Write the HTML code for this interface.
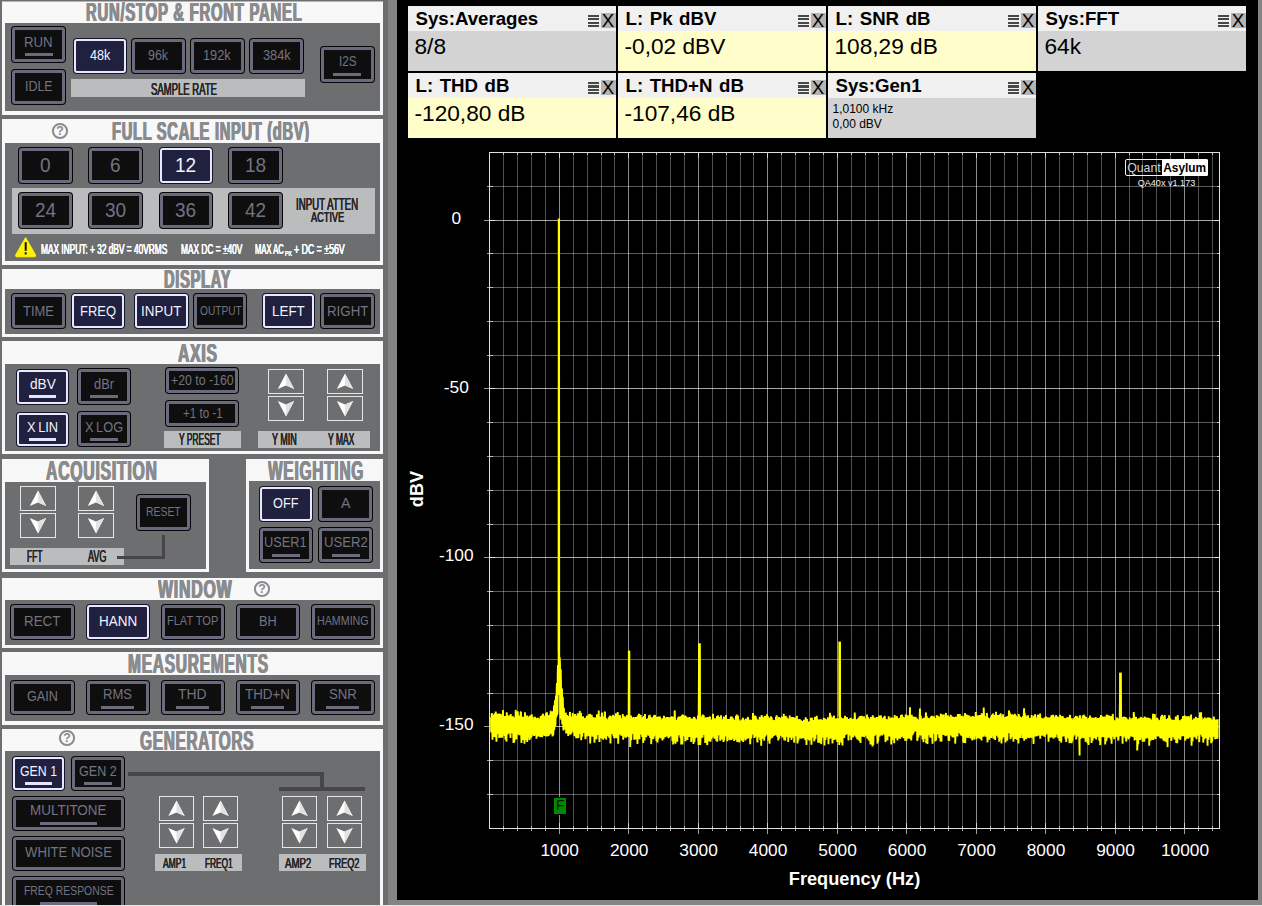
<!DOCTYPE html>
<html><head><meta charset="utf-8"><title>QA40x</title>
<style>
html,body{margin:0;padding:0}
body{width:1262px;height:906px;overflow:hidden;position:relative;background:#6d6e70;font-family:"Liberation Sans",sans-serif}
#strip{position:absolute;left:388px;top:0;width:874px;height:906px;background:#848484}
#blk{position:absolute;left:397px;top:0;width:861px;height:900px;background:#000}
#bot{position:absolute;left:0;top:905px;width:1262px;height:1px;background:#e4e4e4;z-index:5}
.r{position:absolute}
.t{position:absolute;white-space:nowrap;transform-origin:0 0;display:block}
.btn{position:absolute;box-sizing:border-box;background:#0e0e0e;border:3px solid #6a6a7c;border-radius:3px;box-shadow:0 0 0 1px #050505}
.btn.on{background:#20203f;border:2px solid #e8e8ff;box-shadow:0 0 0 1px #15152a}
.arr{position:absolute;display:block;overflow:visible}
.mb{position:absolute;width:208px;height:65px;overflow:hidden}
.mh{position:absolute;left:0;top:0;width:208px;height:25px;background:#f0f0f0}
.mh b{position:absolute;left:7.5px;top:1.5px;font-size:18.67px;line-height:21px;color:#000;white-space:nowrap;word-spacing:1.4px}
.mn{position:absolute;left:180px;top:9px;width:11px;height:12px;background:repeating-linear-gradient(#484848 0,#484848 2.2px,#f0f0f0 2.2px,#f0f0f0 3.3px)}
.mx{position:absolute;left:193px;top:7px;width:15px;height:15px;background:#b4b4b4;color:#000;font-style:normal;font-size:18.67px;line-height:15px;text-align:center;text-indent:-1px}
.mv{position:absolute;left:6.5px;top:26.6px;font-size:22.67px;line-height:26px;color:#000;white-space:nowrap}
.ms{position:absolute;left:4.5px;top:29px;font-size:12px;line-height:15.2px;color:#000;white-space:nowrap}
.title{text-shadow:0.9px 0 0 currentColor,-0.9px 0 0 currentColor}
.lbl{text-shadow:0.3px 0 0 currentColor,-0.3px 0 0 currentColor}
.ct{font-family:"Liberation Sans",sans-serif}
</style></head>
<body>
<div id="strip"></div><div id="blk"></div><div id="bot"></div>
<div id="leftpane">
<div class="r " style="left:2.00px;top:1.00px;width:381.30px;height:1.20px;background:#b4b4b6;"></div>
<div class="r panel" style="left:2.00px;top:2.00px;width:381.30px;height:112.60px;background:#f8f8f8;"></div>
<div class="r inner" style="left:5.00px;top:23.40px;width:375.00px;height:87.60px;background:#6d6e70;"></div>
<span class="t title" style="left:86.20px;top:-0.47px;font-size:25.44px;line-height:25.44px;color:#8a8b8e;font-weight:bold;height:22.89px;overflow:hidden;letter-spacing:1.3px;transform:scaleX(0.5843)">RUN/STOP &amp; FRONT PANEL</span>
<div class="btn" style="left:12.00px;top:27.00px;width:53.00px;height:35.00px"></div>
<span class="t bl" style="left:24.20px;top:34.98px;font-size:14.53px;line-height:14.53px;color:#737382;transform:scaleX(0.9082)">RUN</span>
<div class="r ul" style="left:24.50px;top:52.90px;width:28.00px;height:3.00px;background:#6b6b7d;"></div>
<div class="btn" style="left:12.00px;top:69.50px;width:53.00px;height:34.10px"></div>
<span class="t bl" style="left:24.70px;top:79.06px;font-size:14.39px;line-height:14.39px;color:#737382;transform:scaleX(0.8627)">IDLE</span>
<div class="btn on" style="left:74.00px;top:38.50px;width:51.60px;height:34.00px"></div>
<span class="t bl" style="left:89.65px;top:48.06px;font-size:14.39px;line-height:14.39px;color:#f2f2ff;transform:scaleX(0.8750)">48k</span>
<div class="btn" style="left:132.00px;top:38.50px;width:52.70px;height:34.00px"></div>
<span class="t bl" style="left:148.35px;top:48.06px;font-size:14.39px;line-height:14.39px;color:#737382;transform:scaleX(0.8620)">96k</span>
<div class="btn" style="left:191.00px;top:38.50px;width:52.70px;height:34.00px"></div>
<span class="t bl" style="left:203.45px;top:48.06px;font-size:14.39px;line-height:14.39px;color:#737382;transform:scaleX(0.8909)">192k</span>
<div class="btn" style="left:250.40px;top:38.50px;width:52.40px;height:34.00px"></div>
<span class="t bl" style="left:262.75px;top:48.06px;font-size:14.39px;line-height:14.39px;color:#737382;transform:scaleX(0.8877)">384k</span>
<div class="btn" style="left:321.00px;top:47.00px;width:52.80px;height:35.00px"></div>
<span class="t bl" style="left:338.55px;top:55.35px;font-size:13.81px;line-height:13.81px;color:#737382;transform:scaleX(0.8540)">I2S</span>
<div class="r ul" style="left:333.40px;top:72.90px;width:28.00px;height:3.00px;background:#6b6b7d;"></div>
<div class="r bar" style="left:70.50px;top:79.00px;width:234.80px;height:18.00px;background:#bbbcbe;"></div>
<span class="t lbl" style="left:151.00px;top:81.25px;font-size:17.01px;line-height:17.01px;color:#262626;transform:scaleX(0.5602)">SAMPLE RATE</span>
<div class="r panel" style="left:2.00px;top:119.30px;width:381.30px;height:145.40px;background:#f8f8f8;"></div>
<div class="r inner" style="left:5.00px;top:142.50px;width:375.00px;height:118.90px;background:#6d6e70;"></div>
<span class="t title" style="left:111.70px;top:118.02px;font-size:26.45px;line-height:26.45px;color:#8a8b8e;font-weight:bold;height:23.81px;overflow:hidden;letter-spacing:1.3px;transform:scaleX(0.5542)">FULL SCALE INPUT (dBV)</span>
<svg class="arr" style="left:50.90px;top:121.50px" width="18" height="18"><circle cx="9" cy="9" r="7.1" fill="none" stroke="#8a8b8e" stroke-width="2"/><text x="9" y="13.4" text-anchor="middle" font-family="Liberation Sans, sans-serif" font-weight="bold" font-size="12.3" fill="#8a8b8e">?</text></svg>
<div class="btn" style="left:19.00px;top:148.00px;width:53.00px;height:34.60px"></div>
<span class="t bl" style="left:40.22px;top:155.51px;font-size:19.48px;line-height:19.48px;color:#737382;transform:scaleX(0.9755)">0</span>
<div class="btn" style="left:89.20px;top:148.00px;width:52.80px;height:34.60px"></div>
<span class="t bl" style="left:110.32px;top:155.51px;font-size:19.48px;line-height:19.48px;color:#737382;transform:scaleX(0.9755)">6</span>
<div class="btn on" style="left:159.50px;top:148.00px;width:52.70px;height:34.60px"></div>
<span class="t bl" style="left:175.28px;top:155.51px;font-size:19.48px;line-height:19.48px;color:#f2f2ff;transform:scaleX(0.9755)">12</span>
<div class="btn" style="left:229.30px;top:148.00px;width:52.50px;height:34.60px"></div>
<span class="t bl" style="left:244.98px;top:155.51px;font-size:19.48px;line-height:19.48px;color:#737382;transform:scaleX(0.9755)">18</span>
<div class="r bar" style="left:12.00px;top:187.60px;width:362.80px;height:46.30px;background:#bbbcbe;"></div>
<div class="btn" style="left:19.00px;top:193.20px;width:53.00px;height:34.70px"></div>
<span class="t bl" style="left:34.93px;top:200.51px;font-size:19.48px;line-height:19.48px;color:#737382;transform:scaleX(0.9755)">24</span>
<div class="btn" style="left:89.20px;top:193.20px;width:52.80px;height:34.70px"></div>
<span class="t bl" style="left:105.03px;top:200.51px;font-size:19.48px;line-height:19.48px;color:#737382;transform:scaleX(0.9755)">30</span>
<div class="btn" style="left:159.50px;top:193.20px;width:52.70px;height:34.70px"></div>
<span class="t bl" style="left:175.28px;top:200.51px;font-size:19.48px;line-height:19.48px;color:#737382;transform:scaleX(0.9755)">36</span>
<div class="btn" style="left:229.30px;top:193.20px;width:52.50px;height:34.70px"></div>
<span class="t bl" style="left:244.98px;top:200.51px;font-size:19.48px;line-height:19.48px;color:#737382;transform:scaleX(0.9755)">42</span>
<span class="t lbl" style="left:296.00px;top:196.83px;font-size:15.84px;line-height:15.84px;color:#262626;transform:scaleX(0.6126)">INPUT ATTEN</span>
<span class="t lbl" style="left:311.00px;top:208.97px;font-size:15.55px;line-height:15.55px;color:#262626;transform:scaleX(0.5910)">ACTIVE</span>
<svg class="arr" style="left:14px;top:236px" width="24" height="22"><path d="M11.6 1.6 L21.6 19 Q22.2 20.6 20.4 20.8 L2.8 20.8 Q1 20.6 1.7 19 Z" fill="#fff200" stroke="#fff200" stroke-width="1" stroke-linejoin="round"/><rect x="10.7" y="6.2" width="2" height="8.6" fill="#111"/><rect x="10.7" y="16.3" width="2" height="2.2" fill="#111"/></svg>
<span class="t lbl" style="left:40.90px;top:242.20px;font-size:14.10px;line-height:14.10px;color:#ffffff;transform:scaleX(0.5904)">MAX INPUT: + 32 dBV = 40VRMS</span>
<span class="t lbl" style="left:180.70px;top:242.20px;font-size:14.10px;line-height:14.10px;color:#ffffff;transform:scaleX(0.5910)">MAX DC = ±40V</span>
<span class="t lbl" style="left:255.20px;top:242.20px;font-size:14.10px;line-height:14.10px;color:#ffffff;transform:scaleX(0.5405)">MAX AC</span>
<span class="t lbl" style="left:284.60px;top:249.90px;font-size:7.70px;line-height:7.70px;color:#ffffff;transform:scaleX(0.6811)">PK</span>
<span class="t lbl" style="left:293.50px;top:242.20px;font-size:14.10px;line-height:14.10px;color:#ffffff;transform:scaleX(0.6228)">+ DC = ±56V</span>
<div class="r panel" style="left:2.00px;top:269.30px;width:381.30px;height:67.50px;background:#f8f8f8;"></div>
<div class="r inner" style="left:5.00px;top:289.10px;width:375.00px;height:44.60px;background:#6d6e70;"></div>
<span class="t title" style="left:164.20px;top:266.53px;font-size:25.44px;line-height:25.44px;color:#8a8b8e;font-weight:bold;height:22.89px;overflow:hidden;letter-spacing:1.3px;transform:scaleX(0.5747)">DISPLAY</span>
<div class="btn" style="left:12.40px;top:294.00px;width:52.40px;height:34.30px"></div>
<span class="t bl" style="left:23.10px;top:303.98px;font-size:14.53px;line-height:14.53px;color:#737382;transform:scaleX(0.8929)">TIME</span>
<div class="btn on" style="left:71.80px;top:294.00px;width:51.90px;height:34.30px"></div>
<span class="t bl" style="left:79.75px;top:303.98px;font-size:14.53px;line-height:14.53px;color:#f2f2ff;transform:scaleX(0.8916)">FREQ</span>
<div class="btn on" style="left:135.40px;top:294.00px;width:52.20px;height:34.30px"></div>
<span class="t bl" style="left:141.30px;top:303.98px;font-size:14.53px;line-height:14.53px;color:#f2f2ff;transform:scaleX(0.9265)">INPUT</span>
<div class="btn" style="left:194.30px;top:294.00px;width:52.20px;height:34.30px"></div>
<span class="t bl" style="left:199.55px;top:303.92px;font-size:13.66px;line-height:13.66px;color:#737382;transform:scaleX(0.7424)">OUTPUT</span>
<div class="btn on" style="left:262.50px;top:294.00px;width:51.90px;height:34.30px"></div>
<span class="t bl" style="left:272.05px;top:303.98px;font-size:14.53px;line-height:14.53px;color:#f2f2ff;transform:scaleX(0.9230)">LEFT</span>
<div class="btn" style="left:321.40px;top:294.00px;width:52.40px;height:34.30px"></div>
<span class="t bl" style="left:326.90px;top:303.98px;font-size:14.53px;line-height:14.53px;color:#737382;transform:scaleX(0.9156)">RIGHT</span>
<div class="r panel" style="left:2.00px;top:340.80px;width:381.30px;height:113.00px;background:#f8f8f8;"></div>
<div class="r inner" style="left:5.00px;top:363.80px;width:375.00px;height:86.80px;background:#6d6e70;"></div>
<span class="t title" style="left:178.40px;top:340.17px;font-size:26.16px;line-height:26.16px;color:#8a8b8e;font-weight:bold;height:23.55px;overflow:hidden;letter-spacing:1.3px;transform:scaleX(0.6003)">AXIS</span>
<div class="btn on" style="left:16.80px;top:369.70px;width:51.60px;height:33.90px"></div>
<span class="t bl" style="left:29.65px;top:376.98px;font-size:14.53px;line-height:14.53px;color:#f2f2ff;transform:scaleX(0.9427)">dBV</span>
<div class="r ul" style="left:29.10px;top:395.05px;width:27.00px;height:3.00px;background:#e4e4ff;"></div>
<div class="btn" style="left:78.30px;top:369.20px;width:52.20px;height:34.50px"></div>
<span class="t bl" style="left:94.40px;top:376.98px;font-size:14.53px;line-height:14.53px;color:#737382;transform:scaleX(0.8842)">dBr</span>
<div class="r ul" style="left:90.40px;top:394.85px;width:28.00px;height:3.00px;background:#6b6b7d;"></div>
<div class="btn on" style="left:16.80px;top:412.50px;width:51.60px;height:33.90px"></div>
<span class="t bl" style="left:27.00px;top:419.98px;font-size:14.53px;line-height:14.53px;color:#f2f2ff;transform:scaleX(0.8858)">X LIN</span>
<div class="r ul" style="left:29.10px;top:437.85px;width:27.00px;height:3.00px;background:#e4e4ff;"></div>
<div class="btn" style="left:77.50px;top:412.20px;width:52.20px;height:34.30px"></div>
<span class="t bl" style="left:84.50px;top:419.98px;font-size:14.53px;line-height:14.53px;color:#737382;transform:scaleX(0.8822)">X LOG</span>
<div class="r ul" style="left:89.60px;top:437.75px;width:28.00px;height:3.00px;background:#6b6b7d;"></div>
<div class="btn" style="left:166.30px;top:368.10px;width:72.10px;height:25.10px"></div>
<span class="t bl" style="left:171.00px;top:374.35px;font-size:13.81px;line-height:13.81px;color:#737382;transform:scaleX(0.8925)">+20 to -160</span>
<div class="btn" style="left:166.30px;top:401.40px;width:72.10px;height:25.10px"></div>
<span class="t bl" style="left:182.55px;top:407.35px;font-size:13.81px;line-height:13.81px;color:#737382;transform:scaleX(0.8388)">+1 to -1</span>
<div class="r bar" style="left:164.30px;top:430.50px;width:76.60px;height:17.10px;background:#bbbcbe;"></div>
<span class="t lbl" style="left:179.40px;top:431.18px;font-size:16.13px;line-height:16.13px;color:#262626;transform:scaleX(0.5232)">Y PRESET</span>
<svg class="arr" style="left:268.00px;top:369.00px" width="36.00" height="25.00"><rect x="0.5" y="0.5" width="35.00" height="24.00" fill="none" stroke="#e6e6e6" stroke-width="1"/><polygon points="18.00,4.6 26.20,20.00 18.00,16.60 9.80,20.00" fill="#ffffff"/><polygon points="18.00,4.6 26.20,20.00 18.00,16.60" fill="#e2e2e2"/></svg>
<svg class="arr" style="left:268.00px;top:396.00px" width="36.00" height="25.00"><rect x="0.5" y="0.5" width="35.00" height="24.00" fill="none" stroke="#e6e6e6" stroke-width="1"/><polygon points="18.00,20.40 26.20,5 18.00,8.4 9.80,5" fill="#ffffff"/><polygon points="18.00,20.40 26.20,5 18.00,8.4" fill="#e2e2e2"/></svg>
<svg class="arr" style="left:327.00px;top:369.00px" width="36.00" height="25.00"><rect x="0.5" y="0.5" width="35.00" height="24.00" fill="none" stroke="#e6e6e6" stroke-width="1"/><polygon points="18.00,4.6 26.20,20.00 18.00,16.60 9.80,20.00" fill="#ffffff"/><polygon points="18.00,4.6 26.20,20.00 18.00,16.60" fill="#e2e2e2"/></svg>
<svg class="arr" style="left:327.00px;top:396.00px" width="36.00" height="25.00"><rect x="0.5" y="0.5" width="35.00" height="24.00" fill="none" stroke="#e6e6e6" stroke-width="1"/><polygon points="18.00,20.40 26.20,5 18.00,8.4 9.80,5" fill="#ffffff"/><polygon points="18.00,20.40 26.20,5 18.00,8.4" fill="#e2e2e2"/></svg>
<div class="r bar" style="left:257.80px;top:430.50px;width:112.20px;height:17.10px;background:#bbbcbe;"></div>
<span class="t lbl" style="left:271.60px;top:431.18px;font-size:16.13px;line-height:16.13px;color:#262626;transform:scaleX(0.5570)">Y MIN</span>
<span class="t lbl" style="left:328.00px;top:431.18px;font-size:16.13px;line-height:16.13px;color:#262626;transform:scaleX(0.5289)">Y MAX</span>
<div class="r panel" style="left:2.00px;top:459.00px;width:206.70px;height:112.90px;background:#f8f8f8;"></div>
<div class="r inner" style="left:5.00px;top:481.60px;width:200.50px;height:87.10px;background:#6d6e70;"></div>
<span class="t title" style="left:46.00px;top:456.87px;font-size:27.76px;line-height:27.76px;color:#8a8b8e;font-weight:bold;height:24.99px;overflow:hidden;letter-spacing:1.3px;transform:scaleX(0.5692)">ACQUISITION</span>
<svg class="arr" style="left:20.00px;top:486.00px" width="36.00" height="25.00"><rect x="0.5" y="0.5" width="35.00" height="24.00" fill="none" stroke="#e6e6e6" stroke-width="1"/><polygon points="18.00,4.6 26.20,20.00 18.00,16.60 9.80,20.00" fill="#ffffff"/><polygon points="18.00,4.6 26.20,20.00 18.00,16.60" fill="#e2e2e2"/></svg>
<svg class="arr" style="left:20.00px;top:513.00px" width="36.00" height="25.00"><rect x="0.5" y="0.5" width="35.00" height="24.00" fill="none" stroke="#e6e6e6" stroke-width="1"/><polygon points="18.00,20.40 26.20,5 18.00,8.4 9.80,5" fill="#ffffff"/><polygon points="18.00,20.40 26.20,5 18.00,8.4" fill="#e2e2e2"/></svg>
<svg class="arr" style="left:78.00px;top:486.00px" width="36.00" height="25.00"><rect x="0.5" y="0.5" width="35.00" height="24.00" fill="none" stroke="#e6e6e6" stroke-width="1"/><polygon points="18.00,4.6 26.20,20.00 18.00,16.60 9.80,20.00" fill="#ffffff"/><polygon points="18.00,4.6 26.20,20.00 18.00,16.60" fill="#e2e2e2"/></svg>
<svg class="arr" style="left:78.00px;top:513.00px" width="36.00" height="25.00"><rect x="0.5" y="0.5" width="35.00" height="24.00" fill="none" stroke="#e6e6e6" stroke-width="1"/><polygon points="18.00,20.40 26.20,5 18.00,8.4 9.80,5" fill="#ffffff"/><polygon points="18.00,20.40 26.20,5 18.00,8.4" fill="#e2e2e2"/></svg>
<div class="btn" style="left:137.30px;top:495.30px;width:52.70px;height:34.50px"></div>
<span class="t bl" style="left:146.30px;top:505.14px;font-size:13.23px;line-height:13.23px;color:#737382;transform:scaleX(0.7869)">RESET</span>
<div class="r bar" style="left:10.00px;top:548.10px;width:114.10px;height:17.00px;background:#bbbcbe;"></div>
<span class="t lbl" style="left:27.30px;top:549.47px;font-size:16.57px;line-height:16.57px;color:#262626;transform:scaleX(0.5104)">FFT</span>
<span class="t lbl" style="left:88.00px;top:549.47px;font-size:16.57px;line-height:16.57px;color:#262626;transform:scaleX(0.5479)">AVG</span>
<div class="r " style="left:162.40px;top:534.70px;width:2.80px;height:24.10px;background:#464648;"></div>
<div class="r " style="left:116.50px;top:555.90px;width:48.70px;height:2.90px;background:#464648;"></div>
<div class="r panel" style="left:246.00px;top:459.00px;width:137.30px;height:112.90px;background:#f8f8f8;"></div>
<div class="r inner" style="left:249.10px;top:481.40px;width:131.10px;height:87.30px;background:#6d6e70;"></div>
<span class="t title" style="left:267.80px;top:456.94px;font-size:27.62px;line-height:27.62px;color:#8a8b8e;font-weight:bold;height:24.85px;overflow:hidden;letter-spacing:1.3px;transform:scaleX(0.5613)">WEIGHTING</span>
<div class="btn on" style="left:259.60px;top:486.50px;width:52.20px;height:34.10px"></div>
<span class="t bl" style="left:273.00px;top:495.19px;font-size:15.12px;line-height:15.12px;color:#f2f2ff;transform:scaleX(0.8404)">OFF</span>
<div class="btn" style="left:319.40px;top:486.50px;width:52.60px;height:34.10px"></div>
<span class="t bl" style="left:340.95px;top:495.19px;font-size:15.12px;line-height:15.12px;color:#737382;transform:scaleX(0.9422)">A</span>
<div class="btn" style="left:259.60px;top:528.20px;width:52.20px;height:34.30px"></div>
<span class="t bl" style="left:264.45px;top:535.26px;font-size:14.97px;line-height:14.97px;color:#737382;transform:scaleX(0.8513)">USER1</span>
<div class="r ul" style="left:271.70px;top:553.75px;width:28.00px;height:3.00px;background:#6b6b7d;"></div>
<div class="btn" style="left:319.40px;top:528.20px;width:52.60px;height:34.30px"></div>
<span class="t bl" style="left:323.75px;top:535.26px;font-size:14.97px;line-height:14.97px;color:#737382;transform:scaleX(0.8794)">USER2</span>
<div class="r ul" style="left:331.70px;top:553.75px;width:28.00px;height:3.00px;background:#6b6b7d;"></div>
<div class="r panel" style="left:2.00px;top:577.50px;width:381.30px;height:70.80px;background:#f8f8f8;"></div>
<div class="r inner" style="left:5.00px;top:600.20px;width:375.00px;height:45.00px;background:#6d6e70;"></div>
<span class="t title" style="left:157.80px;top:575.95px;font-size:26.60px;line-height:26.60px;color:#8a8b8e;font-weight:bold;height:23.94px;overflow:hidden;letter-spacing:1.3px;transform:scaleX(0.5974)">WINDOW</span>
<svg class="arr" style="left:252.80px;top:580.00px" width="18" height="18"><circle cx="9" cy="9" r="7.1" fill="none" stroke="#8a8b8e" stroke-width="2"/><text x="9" y="13.4" text-anchor="middle" font-family="Liberation Sans, sans-serif" font-weight="bold" font-size="12.3" fill="#8a8b8e">?</text></svg>
<div class="btn" style="left:11.30px;top:604.50px;width:62.50px;height:34.00px"></div>
<span class="t bl" style="left:24.35px;top:614.06px;font-size:14.39px;line-height:14.39px;color:#737382;transform:scaleX(0.9292)">RECT</span>
<div class="btn on" style="left:86.60px;top:604.50px;width:62.20px;height:34.00px"></div>
<span class="t bl" style="left:98.55px;top:614.06px;font-size:14.39px;line-height:14.39px;color:#f2f2ff;transform:scaleX(0.9393)">HANN</span>
<div class="btn" style="left:161.50px;top:604.50px;width:62.10px;height:34.00px"></div>
<span class="t bl" style="left:166.90px;top:614.06px;font-size:13.37px;line-height:13.37px;color:#737382;transform:scaleX(0.8250)">FLAT TOP</span>
<div class="btn" style="left:236.70px;top:604.50px;width:62.10px;height:34.00px"></div>
<span class="t bl" style="left:258.90px;top:614.06px;font-size:14.39px;line-height:14.39px;color:#737382;transform:scaleX(0.8854)">BH</span>
<div class="btn" style="left:311.50px;top:604.50px;width:62.30px;height:34.00px"></div>
<span class="t bl" style="left:316.80px;top:614.06px;font-size:13.37px;line-height:13.37px;color:#737382;transform:scaleX(0.8000)">HAMMING</span>
<div class="r panel" style="left:2.00px;top:652.30px;width:381.30px;height:72.50px;background:#f8f8f8;"></div>
<div class="r inner" style="left:5.00px;top:675.10px;width:375.00px;height:46.10px;background:#6d6e70;"></div>
<span class="t title" style="left:127.60px;top:650.81px;font-size:26.89px;line-height:26.89px;color:#8a8b8e;font-weight:bold;height:24.20px;overflow:hidden;letter-spacing:1.3px;transform:scaleX(0.5772)">MEASUREMENTS</span>
<div class="btn" style="left:11.30px;top:680.50px;width:62.50px;height:33.80px"></div>
<span class="t bl" style="left:27.10px;top:690.27px;font-size:13.95px;line-height:13.95px;color:#737382;transform:scaleX(0.9058)">GAIN</span>
<div class="btn" style="left:86.60px;top:680.50px;width:62.20px;height:33.80px"></div>
<span class="t bl" style="left:103.20px;top:688.27px;font-size:13.95px;line-height:13.95px;color:#737382;transform:scaleX(0.9352)">RMS</span>
<div class="r ul" style="left:101.35px;top:705.80px;width:32.70px;height:3.00px;background:#6b6b7d;"></div>
<div class="btn" style="left:161.50px;top:680.50px;width:62.10px;height:33.80px"></div>
<span class="t bl" style="left:178.25px;top:688.27px;font-size:13.95px;line-height:13.95px;color:#737382;transform:scaleX(0.9973)">THD</span>
<div class="r ul" style="left:176.20px;top:705.80px;width:32.70px;height:3.00px;background:#6b6b7d;"></div>
<div class="btn" style="left:236.70px;top:680.50px;width:62.10px;height:33.80px"></div>
<span class="t bl" style="left:245.25px;top:688.27px;font-size:13.95px;line-height:13.95px;color:#737382;transform:scaleX(0.9594)">THD+N</span>
<div class="r ul" style="left:251.40px;top:705.80px;width:32.70px;height:3.00px;background:#6b6b7d;"></div>
<div class="btn" style="left:311.50px;top:680.50px;width:62.30px;height:33.80px"></div>
<span class="t bl" style="left:328.70px;top:688.27px;font-size:13.95px;line-height:13.95px;color:#737382;transform:scaleX(0.9470)">SNR</span>
<div class="r ul" style="left:326.30px;top:705.80px;width:32.70px;height:3.00px;background:#6b6b7d;"></div>
<div class="r panel" style="left:2.00px;top:728.70px;width:381.30px;height:186.30px;background:#f8f8f8;"></div>
<div class="r inner" style="left:5.00px;top:751.20px;width:375.00px;height:163.80px;background:#6d6e70;"></div>
<span class="t title" style="left:140.30px;top:726.72px;font-size:28.05px;line-height:28.05px;color:#8a8b8e;font-weight:bold;height:25.25px;overflow:hidden;letter-spacing:1.3px;transform:scaleX(0.5486)">GENERATORS</span>
<svg class="arr" style="left:58.40px;top:729.20px" width="18" height="18"><circle cx="9" cy="9" r="7.1" fill="none" stroke="#8a8b8e" stroke-width="2"/><text x="9" y="13.4" text-anchor="middle" font-family="Liberation Sans, sans-serif" font-weight="bold" font-size="12.3" fill="#8a8b8e">?</text></svg>
<div class="btn on" style="left:12.90px;top:756.70px;width:51.60px;height:33.70px"></div>
<span class="t bl" style="left:20.20px;top:764.20px;font-size:14.10px;line-height:14.10px;color:#f2f2ff;transform:scaleX(0.8745)">GEN 1</span>
<div class="r ul" style="left:25.20px;top:781.95px;width:27.00px;height:3.00px;background:#e4e4ff;"></div>
<div class="btn" style="left:71.50px;top:756.70px;width:52.40px;height:33.70px"></div>
<span class="t bl" style="left:78.85px;top:764.20px;font-size:14.10px;line-height:14.10px;color:#737382;transform:scaleX(0.8910)">GEN 2</span>
<div class="r ul" style="left:83.70px;top:781.95px;width:28.00px;height:3.00px;background:#6b6b7d;"></div>
<div class="btn" style="left:12.90px;top:796.80px;width:111.00px;height:33.70px"></div>
<span class="t bl" style="left:30.10px;top:804.35px;font-size:13.81px;line-height:13.81px;color:#737382;transform:scaleX(0.9757)">MULTITONE</span>
<div class="r ul" style="left:39.90px;top:822.05px;width:57.00px;height:3.00px;background:#6b6b7d;"></div>
<div class="btn" style="left:12.90px;top:836.50px;width:111.00px;height:33.40px"></div>
<span class="t bl" style="left:24.90px;top:846.27px;font-size:13.95px;line-height:13.95px;color:#737382;transform:scaleX(0.9431)">WHITE NOISE</span>
<div class="btn" style="left:12.90px;top:876.50px;width:111.00px;height:33.70px"></div>
<span class="t bl" style="left:23.55px;top:884.06px;font-size:13.37px;line-height:13.37px;color:#737382;transform:scaleX(0.7788)">FREQ RESPONSE</span>
<div class="r ul" style="left:39.90px;top:901.75px;width:57.00px;height:3.00px;background:#6b6b7d;"></div>
<div class="r " style="left:128.40px;top:771.60px;width:195.50px;height:4.30px;background:#464648;"></div>
<div class="r " style="left:320.10px;top:771.60px;width:3.80px;height:16.40px;background:#464648;"></div>
<div class="r " style="left:279.20px;top:786.70px;width:85.90px;height:4.10px;background:#464648;"></div>
<svg class="arr" style="left:159.00px;top:796.00px" width="35.00" height="25.00"><rect x="0.5" y="0.5" width="34.00" height="24.00" fill="none" stroke="#e6e6e6" stroke-width="1"/><polygon points="17.50,4.6 25.70,20.00 17.50,16.60 9.30,20.00" fill="#ffffff"/><polygon points="17.50,4.6 25.70,20.00 17.50,16.60" fill="#e2e2e2"/></svg>
<svg class="arr" style="left:159.00px;top:823.00px" width="35.00" height="25.00"><rect x="0.5" y="0.5" width="34.00" height="24.00" fill="none" stroke="#e6e6e6" stroke-width="1"/><polygon points="17.50,20.40 25.70,5 17.50,8.4 9.30,5" fill="#ffffff"/><polygon points="17.50,20.40 25.70,5 17.50,8.4" fill="#e2e2e2"/></svg>
<svg class="arr" style="left:203.00px;top:796.00px" width="35.00" height="25.00"><rect x="0.5" y="0.5" width="34.00" height="24.00" fill="none" stroke="#e6e6e6" stroke-width="1"/><polygon points="17.50,4.6 25.70,20.00 17.50,16.60 9.30,20.00" fill="#ffffff"/><polygon points="17.50,4.6 25.70,20.00 17.50,16.60" fill="#e2e2e2"/></svg>
<svg class="arr" style="left:203.00px;top:823.00px" width="35.00" height="25.00"><rect x="0.5" y="0.5" width="34.00" height="24.00" fill="none" stroke="#e6e6e6" stroke-width="1"/><polygon points="17.50,20.40 25.70,5 17.50,8.4 9.30,5" fill="#ffffff"/><polygon points="17.50,20.40 25.70,5 17.50,8.4" fill="#e2e2e2"/></svg>
<svg class="arr" style="left:282.00px;top:796.00px" width="35.00" height="25.00"><rect x="0.5" y="0.5" width="34.00" height="24.00" fill="none" stroke="#e6e6e6" stroke-width="1"/><polygon points="17.50,4.6 25.70,20.00 17.50,16.60 9.30,20.00" fill="#ffffff"/><polygon points="17.50,4.6 25.70,20.00 17.50,16.60" fill="#e2e2e2"/></svg>
<svg class="arr" style="left:282.00px;top:823.00px" width="35.00" height="25.00"><rect x="0.5" y="0.5" width="34.00" height="24.00" fill="none" stroke="#e6e6e6" stroke-width="1"/><polygon points="17.50,20.40 25.70,5 17.50,8.4 9.30,5" fill="#ffffff"/><polygon points="17.50,20.40 25.70,5 17.50,8.4" fill="#e2e2e2"/></svg>
<svg class="arr" style="left:327.00px;top:796.00px" width="35.00" height="25.00"><rect x="0.5" y="0.5" width="34.00" height="24.00" fill="none" stroke="#e6e6e6" stroke-width="1"/><polygon points="17.50,4.6 25.70,20.00 17.50,16.60 9.30,20.00" fill="#ffffff"/><polygon points="17.50,4.6 25.70,20.00 17.50,16.60" fill="#e2e2e2"/></svg>
<svg class="arr" style="left:327.00px;top:823.00px" width="35.00" height="25.00"><rect x="0.5" y="0.5" width="34.00" height="24.00" fill="none" stroke="#e6e6e6" stroke-width="1"/><polygon points="17.50,20.40 25.70,5 17.50,8.4 9.30,5" fill="#ffffff"/><polygon points="17.50,20.40 25.70,5 17.50,8.4" fill="#e2e2e2"/></svg>
<div class="r bar" style="left:155.00px;top:853.90px;width:86.70px;height:16.90px;background:#bbbcbe;"></div>
<div class="r bar" style="left:278.90px;top:853.90px;width:87.00px;height:16.90px;background:#bbbcbe;"></div>
<span class="t lbl" style="left:163.20px;top:855.05px;font-size:15.41px;line-height:15.41px;color:#262626;transform:scaleX(0.5529)">AMP1</span>
<span class="t lbl" style="left:205.40px;top:855.05px;font-size:15.41px;line-height:15.41px;color:#262626;transform:scaleX(0.5373)">FREQ1</span>
<span class="t lbl" style="left:285.30px;top:855.05px;font-size:15.41px;line-height:15.41px;color:#262626;transform:scaleX(0.6268)">AMP2</span>
<span class="t lbl" style="left:328.70px;top:855.05px;font-size:15.41px;line-height:15.41px;color:#262626;transform:scaleX(0.5918)">FREQ2</span>
</div>
<div id="meas">
<div class="mb" style="left:408px;top:6px;background:#d3d3d3"><div class="mh"><b>Sys:Averages</b><i class="mn"></i><i class="mx">X</i></div>
<div class="mv">8/8</div></div>
<div class="mb" style="left:618px;top:6px;background:#fffdc9"><div class="mh"><b>L: Pk dBV</b><i class="mn"></i><i class="mx">X</i></div>
<div class="mv">-0,02 dBV</div></div>
<div class="mb" style="left:828px;top:6px;background:#fffdc9"><div class="mh"><b>L: SNR dB</b><i class="mn"></i><i class="mx">X</i></div>
<div class="mv">108,29 dB</div></div>
<div class="mb" style="left:1038px;top:6px;background:#d3d3d3"><div class="mh"><b>Sys:FFT</b><i class="mn"></i><i class="mx">X</i></div>
<div class="mv">64k</div></div>
<div class="mb" style="left:408px;top:73px;background:#fffdc9"><div class="mh"><b>L: THD dB</b><i class="mn"></i><i class="mx">X</i></div>
<div class="mv">-120,80 dB</div></div>
<div class="mb" style="left:618px;top:73px;background:#fffdc9"><div class="mh"><b>L: THD+N dB</b><i class="mn"></i><i class="mx">X</i></div>
<div class="mv">-107,46 dB</div></div>
<div class="mb" style="left:828px;top:73px;background:#d3d3d3"><div class="mh"><b>Sys:Gen1</b><i class="mn"></i><i class="mx">X</i></div>
<div class="ms">1,0100 kHz<br>0,00 dBV</div></div>
</div>
<svg id="chart" width="1262" height="906" viewBox="0 0 1262 906" style="position:absolute;left:0;top:0">
<g shape-rendering="crispEdges" stroke-width="1"><line x1="503.5" y1="152.5" x2="503.5" y2="828.1" stroke="rgba(255,255,255,0.31)"/><line x1="503.5" y1="825.5" x2="503.5" y2="830.7" stroke="rgba(255,255,255,0.62)"/><line x1="503.5" y1="152.5" x2="503.5" y2="155.1" stroke="rgba(255,255,255,0.62)"/><line x1="517.5" y1="152.5" x2="517.5" y2="828.1" stroke="rgba(255,255,255,0.31)"/><line x1="517.5" y1="825.5" x2="517.5" y2="830.7" stroke="rgba(255,255,255,0.62)"/><line x1="517.5" y1="152.5" x2="517.5" y2="155.1" stroke="rgba(255,255,255,0.62)"/><line x1="531.5" y1="152.5" x2="531.5" y2="828.1" stroke="rgba(255,255,255,0.31)"/><line x1="531.5" y1="825.5" x2="531.5" y2="830.7" stroke="rgba(255,255,255,0.62)"/><line x1="531.5" y1="152.5" x2="531.5" y2="155.1" stroke="rgba(255,255,255,0.62)"/><line x1="545.5" y1="152.5" x2="545.5" y2="828.1" stroke="rgba(255,255,255,0.31)"/><line x1="545.5" y1="825.5" x2="545.5" y2="830.7" stroke="rgba(255,255,255,0.62)"/><line x1="545.5" y1="152.5" x2="545.5" y2="155.1" stroke="rgba(255,255,255,0.62)"/><line x1="559.5" y1="152.5" x2="559.5" y2="828.1" stroke="rgba(255,255,255,0.55)"/><line x1="559.5" y1="822.6" x2="559.5" y2="833.6" stroke="rgba(255,255,255,0.62)"/><line x1="559.5" y1="152.5" x2="559.5" y2="158.0" stroke="rgba(255,255,255,0.62)"/><line x1="573.5" y1="152.5" x2="573.5" y2="828.1" stroke="rgba(255,255,255,0.31)"/><line x1="573.5" y1="825.5" x2="573.5" y2="830.7" stroke="rgba(255,255,255,0.62)"/><line x1="573.5" y1="152.5" x2="573.5" y2="155.1" stroke="rgba(255,255,255,0.62)"/><line x1="587.5" y1="152.5" x2="587.5" y2="828.1" stroke="rgba(255,255,255,0.31)"/><line x1="587.5" y1="825.5" x2="587.5" y2="830.7" stroke="rgba(255,255,255,0.62)"/><line x1="587.5" y1="152.5" x2="587.5" y2="155.1" stroke="rgba(255,255,255,0.62)"/><line x1="601.5" y1="152.5" x2="601.5" y2="828.1" stroke="rgba(255,255,255,0.31)"/><line x1="601.5" y1="825.5" x2="601.5" y2="830.7" stroke="rgba(255,255,255,0.62)"/><line x1="601.5" y1="152.5" x2="601.5" y2="155.1" stroke="rgba(255,255,255,0.62)"/><line x1="614.5" y1="152.5" x2="614.5" y2="828.1" stroke="rgba(255,255,255,0.31)"/><line x1="614.5" y1="825.5" x2="614.5" y2="830.7" stroke="rgba(255,255,255,0.62)"/><line x1="614.5" y1="152.5" x2="614.5" y2="155.1" stroke="rgba(255,255,255,0.62)"/><line x1="628.5" y1="152.5" x2="628.5" y2="828.1" stroke="rgba(255,255,255,0.55)"/><line x1="628.5" y1="822.6" x2="628.5" y2="833.6" stroke="rgba(255,255,255,0.62)"/><line x1="628.5" y1="152.5" x2="628.5" y2="158.0" stroke="rgba(255,255,255,0.62)"/><line x1="642.5" y1="152.5" x2="642.5" y2="828.1" stroke="rgba(255,255,255,0.31)"/><line x1="642.5" y1="825.5" x2="642.5" y2="830.7" stroke="rgba(255,255,255,0.62)"/><line x1="642.5" y1="152.5" x2="642.5" y2="155.1" stroke="rgba(255,255,255,0.62)"/><line x1="656.5" y1="152.5" x2="656.5" y2="828.1" stroke="rgba(255,255,255,0.31)"/><line x1="656.5" y1="825.5" x2="656.5" y2="830.7" stroke="rgba(255,255,255,0.62)"/><line x1="656.5" y1="152.5" x2="656.5" y2="155.1" stroke="rgba(255,255,255,0.62)"/><line x1="670.5" y1="152.5" x2="670.5" y2="828.1" stroke="rgba(255,255,255,0.31)"/><line x1="670.5" y1="825.5" x2="670.5" y2="830.7" stroke="rgba(255,255,255,0.62)"/><line x1="670.5" y1="152.5" x2="670.5" y2="155.1" stroke="rgba(255,255,255,0.62)"/><line x1="684.5" y1="152.5" x2="684.5" y2="828.1" stroke="rgba(255,255,255,0.31)"/><line x1="684.5" y1="825.5" x2="684.5" y2="830.7" stroke="rgba(255,255,255,0.62)"/><line x1="684.5" y1="152.5" x2="684.5" y2="155.1" stroke="rgba(255,255,255,0.62)"/><line x1="698.5" y1="152.5" x2="698.5" y2="828.1" stroke="rgba(255,255,255,0.55)"/><line x1="698.5" y1="822.6" x2="698.5" y2="833.6" stroke="rgba(255,255,255,0.62)"/><line x1="698.5" y1="152.5" x2="698.5" y2="158.0" stroke="rgba(255,255,255,0.62)"/><line x1="712.5" y1="152.5" x2="712.5" y2="828.1" stroke="rgba(255,255,255,0.31)"/><line x1="712.5" y1="825.5" x2="712.5" y2="830.7" stroke="rgba(255,255,255,0.62)"/><line x1="712.5" y1="152.5" x2="712.5" y2="155.1" stroke="rgba(255,255,255,0.62)"/><line x1="726.5" y1="152.5" x2="726.5" y2="828.1" stroke="rgba(255,255,255,0.31)"/><line x1="726.5" y1="825.5" x2="726.5" y2="830.7" stroke="rgba(255,255,255,0.62)"/><line x1="726.5" y1="152.5" x2="726.5" y2="155.1" stroke="rgba(255,255,255,0.62)"/><line x1="740.5" y1="152.5" x2="740.5" y2="828.1" stroke="rgba(255,255,255,0.31)"/><line x1="740.5" y1="825.5" x2="740.5" y2="830.7" stroke="rgba(255,255,255,0.62)"/><line x1="740.5" y1="152.5" x2="740.5" y2="155.1" stroke="rgba(255,255,255,0.62)"/><line x1="753.5" y1="152.5" x2="753.5" y2="828.1" stroke="rgba(255,255,255,0.31)"/><line x1="753.5" y1="825.5" x2="753.5" y2="830.7" stroke="rgba(255,255,255,0.62)"/><line x1="753.5" y1="152.5" x2="753.5" y2="155.1" stroke="rgba(255,255,255,0.62)"/><line x1="767.5" y1="152.5" x2="767.5" y2="828.1" stroke="rgba(255,255,255,0.55)"/><line x1="767.5" y1="822.6" x2="767.5" y2="833.6" stroke="rgba(255,255,255,0.62)"/><line x1="767.5" y1="152.5" x2="767.5" y2="158.0" stroke="rgba(255,255,255,0.62)"/><line x1="781.5" y1="152.5" x2="781.5" y2="828.1" stroke="rgba(255,255,255,0.31)"/><line x1="781.5" y1="825.5" x2="781.5" y2="830.7" stroke="rgba(255,255,255,0.62)"/><line x1="781.5" y1="152.5" x2="781.5" y2="155.1" stroke="rgba(255,255,255,0.62)"/><line x1="795.5" y1="152.5" x2="795.5" y2="828.1" stroke="rgba(255,255,255,0.31)"/><line x1="795.5" y1="825.5" x2="795.5" y2="830.7" stroke="rgba(255,255,255,0.62)"/><line x1="795.5" y1="152.5" x2="795.5" y2="155.1" stroke="rgba(255,255,255,0.62)"/><line x1="809.5" y1="152.5" x2="809.5" y2="828.1" stroke="rgba(255,255,255,0.31)"/><line x1="809.5" y1="825.5" x2="809.5" y2="830.7" stroke="rgba(255,255,255,0.62)"/><line x1="809.5" y1="152.5" x2="809.5" y2="155.1" stroke="rgba(255,255,255,0.62)"/><line x1="823.5" y1="152.5" x2="823.5" y2="828.1" stroke="rgba(255,255,255,0.31)"/><line x1="823.5" y1="825.5" x2="823.5" y2="830.7" stroke="rgba(255,255,255,0.62)"/><line x1="823.5" y1="152.5" x2="823.5" y2="155.1" stroke="rgba(255,255,255,0.62)"/><line x1="837.5" y1="152.5" x2="837.5" y2="828.1" stroke="rgba(255,255,255,0.55)"/><line x1="837.5" y1="822.6" x2="837.5" y2="833.6" stroke="rgba(255,255,255,0.62)"/><line x1="837.5" y1="152.5" x2="837.5" y2="158.0" stroke="rgba(255,255,255,0.62)"/><line x1="851.5" y1="152.5" x2="851.5" y2="828.1" stroke="rgba(255,255,255,0.31)"/><line x1="851.5" y1="825.5" x2="851.5" y2="830.7" stroke="rgba(255,255,255,0.62)"/><line x1="851.5" y1="152.5" x2="851.5" y2="155.1" stroke="rgba(255,255,255,0.62)"/><line x1="865.5" y1="152.5" x2="865.5" y2="828.1" stroke="rgba(255,255,255,0.31)"/><line x1="865.5" y1="825.5" x2="865.5" y2="830.7" stroke="rgba(255,255,255,0.62)"/><line x1="865.5" y1="152.5" x2="865.5" y2="155.1" stroke="rgba(255,255,255,0.62)"/><line x1="878.5" y1="152.5" x2="878.5" y2="828.1" stroke="rgba(255,255,255,0.31)"/><line x1="878.5" y1="825.5" x2="878.5" y2="830.7" stroke="rgba(255,255,255,0.62)"/><line x1="878.5" y1="152.5" x2="878.5" y2="155.1" stroke="rgba(255,255,255,0.62)"/><line x1="892.5" y1="152.5" x2="892.5" y2="828.1" stroke="rgba(255,255,255,0.31)"/><line x1="892.5" y1="825.5" x2="892.5" y2="830.7" stroke="rgba(255,255,255,0.62)"/><line x1="892.5" y1="152.5" x2="892.5" y2="155.1" stroke="rgba(255,255,255,0.62)"/><line x1="906.5" y1="152.5" x2="906.5" y2="828.1" stroke="rgba(255,255,255,0.55)"/><line x1="906.5" y1="822.6" x2="906.5" y2="833.6" stroke="rgba(255,255,255,0.62)"/><line x1="906.5" y1="152.5" x2="906.5" y2="158.0" stroke="rgba(255,255,255,0.62)"/><line x1="920.5" y1="152.5" x2="920.5" y2="828.1" stroke="rgba(255,255,255,0.31)"/><line x1="920.5" y1="825.5" x2="920.5" y2="830.7" stroke="rgba(255,255,255,0.62)"/><line x1="920.5" y1="152.5" x2="920.5" y2="155.1" stroke="rgba(255,255,255,0.62)"/><line x1="934.5" y1="152.5" x2="934.5" y2="828.1" stroke="rgba(255,255,255,0.31)"/><line x1="934.5" y1="825.5" x2="934.5" y2="830.7" stroke="rgba(255,255,255,0.62)"/><line x1="934.5" y1="152.5" x2="934.5" y2="155.1" stroke="rgba(255,255,255,0.62)"/><line x1="948.5" y1="152.5" x2="948.5" y2="828.1" stroke="rgba(255,255,255,0.31)"/><line x1="948.5" y1="825.5" x2="948.5" y2="830.7" stroke="rgba(255,255,255,0.62)"/><line x1="948.5" y1="152.5" x2="948.5" y2="155.1" stroke="rgba(255,255,255,0.62)"/><line x1="962.5" y1="152.5" x2="962.5" y2="828.1" stroke="rgba(255,255,255,0.31)"/><line x1="962.5" y1="825.5" x2="962.5" y2="830.7" stroke="rgba(255,255,255,0.62)"/><line x1="962.5" y1="152.5" x2="962.5" y2="155.1" stroke="rgba(255,255,255,0.62)"/><line x1="976.5" y1="152.5" x2="976.5" y2="828.1" stroke="rgba(255,255,255,0.55)"/><line x1="976.5" y1="822.6" x2="976.5" y2="833.6" stroke="rgba(255,255,255,0.62)"/><line x1="976.5" y1="152.5" x2="976.5" y2="158.0" stroke="rgba(255,255,255,0.62)"/><line x1="990.5" y1="152.5" x2="990.5" y2="828.1" stroke="rgba(255,255,255,0.31)"/><line x1="990.5" y1="825.5" x2="990.5" y2="830.7" stroke="rgba(255,255,255,0.62)"/><line x1="990.5" y1="152.5" x2="990.5" y2="155.1" stroke="rgba(255,255,255,0.62)"/><line x1="1004.5" y1="152.5" x2="1004.5" y2="828.1" stroke="rgba(255,255,255,0.31)"/><line x1="1004.5" y1="825.5" x2="1004.5" y2="830.7" stroke="rgba(255,255,255,0.62)"/><line x1="1004.5" y1="152.5" x2="1004.5" y2="155.1" stroke="rgba(255,255,255,0.62)"/><line x1="1017.5" y1="152.5" x2="1017.5" y2="828.1" stroke="rgba(255,255,255,0.31)"/><line x1="1017.5" y1="825.5" x2="1017.5" y2="830.7" stroke="rgba(255,255,255,0.62)"/><line x1="1017.5" y1="152.5" x2="1017.5" y2="155.1" stroke="rgba(255,255,255,0.62)"/><line x1="1031.5" y1="152.5" x2="1031.5" y2="828.1" stroke="rgba(255,255,255,0.31)"/><line x1="1031.5" y1="825.5" x2="1031.5" y2="830.7" stroke="rgba(255,255,255,0.62)"/><line x1="1031.5" y1="152.5" x2="1031.5" y2="155.1" stroke="rgba(255,255,255,0.62)"/><line x1="1045.5" y1="152.5" x2="1045.5" y2="828.1" stroke="rgba(255,255,255,0.55)"/><line x1="1045.5" y1="822.6" x2="1045.5" y2="833.6" stroke="rgba(255,255,255,0.62)"/><line x1="1045.5" y1="152.5" x2="1045.5" y2="158.0" stroke="rgba(255,255,255,0.62)"/><line x1="1059.5" y1="152.5" x2="1059.5" y2="828.1" stroke="rgba(255,255,255,0.31)"/><line x1="1059.5" y1="825.5" x2="1059.5" y2="830.7" stroke="rgba(255,255,255,0.62)"/><line x1="1059.5" y1="152.5" x2="1059.5" y2="155.1" stroke="rgba(255,255,255,0.62)"/><line x1="1073.5" y1="152.5" x2="1073.5" y2="828.1" stroke="rgba(255,255,255,0.31)"/><line x1="1073.5" y1="825.5" x2="1073.5" y2="830.7" stroke="rgba(255,255,255,0.62)"/><line x1="1073.5" y1="152.5" x2="1073.5" y2="155.1" stroke="rgba(255,255,255,0.62)"/><line x1="1087.5" y1="152.5" x2="1087.5" y2="828.1" stroke="rgba(255,255,255,0.31)"/><line x1="1087.5" y1="825.5" x2="1087.5" y2="830.7" stroke="rgba(255,255,255,0.62)"/><line x1="1087.5" y1="152.5" x2="1087.5" y2="155.1" stroke="rgba(255,255,255,0.62)"/><line x1="1101.5" y1="152.5" x2="1101.5" y2="828.1" stroke="rgba(255,255,255,0.31)"/><line x1="1101.5" y1="825.5" x2="1101.5" y2="830.7" stroke="rgba(255,255,255,0.62)"/><line x1="1101.5" y1="152.5" x2="1101.5" y2="155.1" stroke="rgba(255,255,255,0.62)"/><line x1="1115.5" y1="152.5" x2="1115.5" y2="828.1" stroke="rgba(255,255,255,0.55)"/><line x1="1115.5" y1="822.6" x2="1115.5" y2="833.6" stroke="rgba(255,255,255,0.62)"/><line x1="1115.5" y1="152.5" x2="1115.5" y2="158.0" stroke="rgba(255,255,255,0.62)"/><line x1="1129.5" y1="152.5" x2="1129.5" y2="828.1" stroke="rgba(255,255,255,0.31)"/><line x1="1129.5" y1="825.5" x2="1129.5" y2="830.7" stroke="rgba(255,255,255,0.62)"/><line x1="1129.5" y1="152.5" x2="1129.5" y2="155.1" stroke="rgba(255,255,255,0.62)"/><line x1="1142.5" y1="152.5" x2="1142.5" y2="828.1" stroke="rgba(255,255,255,0.31)"/><line x1="1142.5" y1="825.5" x2="1142.5" y2="830.7" stroke="rgba(255,255,255,0.62)"/><line x1="1142.5" y1="152.5" x2="1142.5" y2="155.1" stroke="rgba(255,255,255,0.62)"/><line x1="1156.5" y1="152.5" x2="1156.5" y2="828.1" stroke="rgba(255,255,255,0.31)"/><line x1="1156.5" y1="825.5" x2="1156.5" y2="830.7" stroke="rgba(255,255,255,0.62)"/><line x1="1156.5" y1="152.5" x2="1156.5" y2="155.1" stroke="rgba(255,255,255,0.62)"/><line x1="1170.5" y1="152.5" x2="1170.5" y2="828.1" stroke="rgba(255,255,255,0.31)"/><line x1="1170.5" y1="825.5" x2="1170.5" y2="830.7" stroke="rgba(255,255,255,0.62)"/><line x1="1170.5" y1="152.5" x2="1170.5" y2="155.1" stroke="rgba(255,255,255,0.62)"/><line x1="1184.5" y1="152.5" x2="1184.5" y2="828.1" stroke="rgba(255,255,255,0.55)"/><line x1="1184.5" y1="822.6" x2="1184.5" y2="833.6" stroke="rgba(255,255,255,0.62)"/><line x1="1184.5" y1="152.5" x2="1184.5" y2="158.0" stroke="rgba(255,255,255,0.62)"/><line x1="1198.5" y1="152.5" x2="1198.5" y2="828.1" stroke="rgba(255,255,255,0.31)"/><line x1="1198.5" y1="825.5" x2="1198.5" y2="830.7" stroke="rgba(255,255,255,0.62)"/><line x1="1198.5" y1="152.5" x2="1198.5" y2="155.1" stroke="rgba(255,255,255,0.62)"/><line x1="1212.5" y1="152.5" x2="1212.5" y2="828.1" stroke="rgba(255,255,255,0.31)"/><line x1="1212.5" y1="825.5" x2="1212.5" y2="830.7" stroke="rgba(255,255,255,0.62)"/><line x1="1212.5" y1="152.5" x2="1212.5" y2="155.1" stroke="rgba(255,255,255,0.62)"/><line x1="489.9" y1="186.5" x2="1219.4" y2="186.5" stroke="rgba(255,255,255,0.355)"/><line x1="487.3" y1="186.5" x2="492.5" y2="186.5" stroke="rgba(255,255,255,0.62)"/><line x1="1216.8" y1="186.5" x2="1219.4" y2="186.5" stroke="rgba(255,255,255,0.62)"/><line x1="489.9" y1="220.5" x2="1219.4" y2="220.5" stroke="rgba(255,255,255,0.66)"/><line x1="484.4" y1="220.5" x2="495.4" y2="220.5" stroke="rgba(255,255,255,0.62)"/><line x1="1213.9" y1="220.5" x2="1219.4" y2="220.5" stroke="rgba(255,255,255,0.62)"/><line x1="489.9" y1="253.5" x2="1219.4" y2="253.5" stroke="rgba(255,255,255,0.355)"/><line x1="487.3" y1="253.5" x2="492.5" y2="253.5" stroke="rgba(255,255,255,0.62)"/><line x1="1216.8" y1="253.5" x2="1219.4" y2="253.5" stroke="rgba(255,255,255,0.62)"/><line x1="489.9" y1="287.5" x2="1219.4" y2="287.5" stroke="rgba(255,255,255,0.355)"/><line x1="487.3" y1="287.5" x2="492.5" y2="287.5" stroke="rgba(255,255,255,0.62)"/><line x1="1216.8" y1="287.5" x2="1219.4" y2="287.5" stroke="rgba(255,255,255,0.62)"/><line x1="489.9" y1="321.5" x2="1219.4" y2="321.5" stroke="rgba(255,255,255,0.355)"/><line x1="487.3" y1="321.5" x2="492.5" y2="321.5" stroke="rgba(255,255,255,0.62)"/><line x1="1216.8" y1="321.5" x2="1219.4" y2="321.5" stroke="rgba(255,255,255,0.62)"/><line x1="489.9" y1="355.5" x2="1219.4" y2="355.5" stroke="rgba(255,255,255,0.355)"/><line x1="487.3" y1="355.5" x2="492.5" y2="355.5" stroke="rgba(255,255,255,0.62)"/><line x1="1216.8" y1="355.5" x2="1219.4" y2="355.5" stroke="rgba(255,255,255,0.62)"/><line x1="489.9" y1="388.5" x2="1219.4" y2="388.5" stroke="rgba(255,255,255,0.66)"/><line x1="484.4" y1="388.5" x2="495.4" y2="388.5" stroke="rgba(255,255,255,0.62)"/><line x1="1213.9" y1="388.5" x2="1219.4" y2="388.5" stroke="rgba(255,255,255,0.62)"/><line x1="489.9" y1="422.5" x2="1219.4" y2="422.5" stroke="rgba(255,255,255,0.355)"/><line x1="487.3" y1="422.5" x2="492.5" y2="422.5" stroke="rgba(255,255,255,0.62)"/><line x1="1216.8" y1="422.5" x2="1219.4" y2="422.5" stroke="rgba(255,255,255,0.62)"/><line x1="489.9" y1="456.5" x2="1219.4" y2="456.5" stroke="rgba(255,255,255,0.355)"/><line x1="487.3" y1="456.5" x2="492.5" y2="456.5" stroke="rgba(255,255,255,0.62)"/><line x1="1216.8" y1="456.5" x2="1219.4" y2="456.5" stroke="rgba(255,255,255,0.62)"/><line x1="489.9" y1="490.5" x2="1219.4" y2="490.5" stroke="rgba(255,255,255,0.355)"/><line x1="487.3" y1="490.5" x2="492.5" y2="490.5" stroke="rgba(255,255,255,0.62)"/><line x1="1216.8" y1="490.5" x2="1219.4" y2="490.5" stroke="rgba(255,255,255,0.62)"/><line x1="489.9" y1="524.5" x2="1219.4" y2="524.5" stroke="rgba(255,255,255,0.355)"/><line x1="487.3" y1="524.5" x2="492.5" y2="524.5" stroke="rgba(255,255,255,0.62)"/><line x1="1216.8" y1="524.5" x2="1219.4" y2="524.5" stroke="rgba(255,255,255,0.62)"/><line x1="489.9" y1="557.5" x2="1219.4" y2="557.5" stroke="rgba(255,255,255,0.66)"/><line x1="484.4" y1="557.5" x2="495.4" y2="557.5" stroke="rgba(255,255,255,0.62)"/><line x1="1213.9" y1="557.5" x2="1219.4" y2="557.5" stroke="rgba(255,255,255,0.62)"/><line x1="489.9" y1="591.5" x2="1219.4" y2="591.5" stroke="rgba(255,255,255,0.355)"/><line x1="487.3" y1="591.5" x2="492.5" y2="591.5" stroke="rgba(255,255,255,0.62)"/><line x1="1216.8" y1="591.5" x2="1219.4" y2="591.5" stroke="rgba(255,255,255,0.62)"/><line x1="489.9" y1="625.5" x2="1219.4" y2="625.5" stroke="rgba(255,255,255,0.355)"/><line x1="487.3" y1="625.5" x2="492.5" y2="625.5" stroke="rgba(255,255,255,0.62)"/><line x1="1216.8" y1="625.5" x2="1219.4" y2="625.5" stroke="rgba(255,255,255,0.62)"/><line x1="489.9" y1="659.5" x2="1219.4" y2="659.5" stroke="rgba(255,255,255,0.355)"/><line x1="487.3" y1="659.5" x2="492.5" y2="659.5" stroke="rgba(255,255,255,0.62)"/><line x1="1216.8" y1="659.5" x2="1219.4" y2="659.5" stroke="rgba(255,255,255,0.62)"/><line x1="489.9" y1="693.5" x2="1219.4" y2="693.5" stroke="rgba(255,255,255,0.355)"/><line x1="487.3" y1="693.5" x2="492.5" y2="693.5" stroke="rgba(255,255,255,0.62)"/><line x1="1216.8" y1="693.5" x2="1219.4" y2="693.5" stroke="rgba(255,255,255,0.62)"/><line x1="489.9" y1="726.5" x2="1219.4" y2="726.5" stroke="rgba(255,255,255,0.66)"/><line x1="484.4" y1="726.5" x2="495.4" y2="726.5" stroke="rgba(255,255,255,0.62)"/><line x1="1213.9" y1="726.5" x2="1219.4" y2="726.5" stroke="rgba(255,255,255,0.62)"/><line x1="489.9" y1="760.5" x2="1219.4" y2="760.5" stroke="rgba(255,255,255,0.355)"/><line x1="487.3" y1="760.5" x2="492.5" y2="760.5" stroke="rgba(255,255,255,0.62)"/><line x1="1216.8" y1="760.5" x2="1219.4" y2="760.5" stroke="rgba(255,255,255,0.62)"/><line x1="489.9" y1="794.5" x2="1219.4" y2="794.5" stroke="rgba(255,255,255,0.355)"/><line x1="487.3" y1="794.5" x2="492.5" y2="794.5" stroke="rgba(255,255,255,0.62)"/><line x1="1216.8" y1="794.5" x2="1219.4" y2="794.5" stroke="rgba(255,255,255,0.62)"/><rect x="489.5" y="152.5" width="730.0" height="676.0" fill="none" stroke="#e0e0e0"/></g>
<path d="M491.0,717.4 L491.2,732.5 L491.5,723.5 L491.7,713.2 L492.0,714.4 L492.2,728.6 L492.5,739.7 L492.7,716.1 L493.0,716.4 L493.2,729.5 L493.5,729.2 L493.7,715.7 L494.0,715.1 L494.2,737.0 L494.5,729.8 L494.7,713.3 L495.0,717.5 L495.2,729.4 L495.5,737.1 L495.7,711.6 L496.0,713.6 L496.2,735.8 L496.5,741.7 L496.7,721.5 L497.0,719.3 L497.2,734.0 L497.5,730.7 L497.7,714.6 L498.0,714.5 L498.2,727.7 L498.5,730.7 L498.7,715.4 L499.0,713.6 L499.2,737.9 L499.5,730.3 L499.7,717.7 L500.0,716.6 L500.2,734.8 L500.5,728.6 L500.7,713.9 L501.0,717.1 L501.2,737.7 L501.5,726.5 L501.7,717.6 L502.0,723.1 L502.2,737.8 L502.5,732.1 L502.7,720.8 L503.0,710.0 L503.2,731.7 L503.5,731.0 L503.7,718.4 L504.0,716.4 L504.2,729.6 L504.5,735.9 L504.7,716.1 L505.0,718.4 L505.2,733.5 L505.5,739.8 L505.7,717.8 L506.0,716.3 L506.2,734.7 L506.5,741.6 L506.7,712.2 L507.0,716.0 L507.2,728.5 L507.5,734.4 L507.7,720.3 L508.0,716.5 L508.2,727.1 L508.5,733.5 L508.7,716.7 L509.0,715.6 L509.2,726.9 L509.5,731.6 L509.7,718.3 L510.0,716.9 L510.2,731.6 L510.5,738.0 L510.7,714.0 L511.0,719.0 L511.2,733.3 L511.5,729.4 L511.7,716.8 L512.0,717.9 L512.2,730.0 L512.5,732.9 L512.7,716.2 L513.0,717.5 L513.2,733.0 L513.5,743.0 L513.7,718.8 L514.0,718.6 L514.2,742.4 L514.5,735.0 L514.7,717.8 L515.0,717.9 L515.2,739.7 L515.5,726.3 L515.7,709.9 L516.0,719.0 L516.2,730.6 L516.5,739.3 L516.7,716.7 L517.0,716.6 L517.2,730.7 L517.5,728.8 L517.7,711.2 L518.0,716.5 L518.2,732.4 L518.5,734.3 L518.7,719.3 L519.0,716.7 L519.2,730.9 L519.5,735.2 L519.7,715.4 L520.0,718.1 L520.2,733.0 L520.5,731.7 L520.7,712.1 L521.0,712.0 L521.2,735.0 L521.5,742.9 L521.7,717.0 L522.0,716.7 L522.2,733.6 L522.5,731.6 L522.7,721.9 L523.0,717.0 L523.2,739.9 L523.5,735.8 L523.7,717.0 L524.0,720.0 L524.2,729.5 L524.5,743.7 L524.7,718.4 L525.0,712.3 L525.2,728.5 L525.5,733.5 L525.7,716.5 L526.0,716.1 L526.2,740.3 L526.5,731.6 L526.7,718.7 L527.0,715.5 L527.2,742.0 L527.5,728.1 L527.7,717.4 L528.0,718.0 L528.2,729.7 L528.5,733.7 L528.7,716.7 L529.0,719.5 L529.2,736.4 L529.5,740.1 L529.7,715.6 L530.0,719.0 L530.2,735.5 L530.5,738.6 L530.7,718.3 L531.0,717.0 L531.2,732.5 L531.5,737.2 L531.7,714.3 L532.0,718.5 L532.2,729.6 L532.5,734.1 L532.7,716.8 L533.0,721.6 L533.2,728.8 L533.5,735.5 L533.7,719.5 L534.0,723.0 L534.2,735.9 L534.5,732.9 L534.7,721.0 L535.0,716.8 L535.2,734.2 L535.5,732.6 L535.7,718.4 L536.0,719.2 L536.2,732.1 L536.5,738.8 L536.7,718.5 L537.0,720.6 L537.2,730.0 L537.5,734.5 L537.7,717.7 L538.0,719.2 L538.2,736.3 L538.5,734.8 L538.7,719.2 L539.0,719.4 L539.2,730.5 L539.5,729.3 L539.7,718.5 L540.0,719.3 L540.2,737.1 L540.5,731.8 L540.7,715.9 L541.0,721.7 L541.2,732.1 L541.5,735.3 L541.7,718.5 L542.0,715.6 L542.2,737.2 L542.5,729.0 L542.7,714.2 L543.0,714.3 L543.2,735.0 L543.5,728.6 L543.7,715.5 L544.0,718.0 L544.2,733.2 L544.5,735.9 L544.7,721.7 L545.0,717.8 L545.2,734.6 L545.5,730.3 L545.7,717.8 L546.0,713.0 L546.2,736.4 L546.5,732.9 L546.7,712.7 L547.0,712.8 L547.2,735.8 L547.5,727.1 L547.7,715.4 L548.0,720.0 L548.2,736.2 L548.5,730.7 L548.7,719.6 L549.0,715.5 L549.2,734.7 L549.5,734.5 L549.7,714.5 L550.0,717.3 L550.2,730.0 L550.5,728.7 L550.7,710.8 L551.0,714.6 L551.2,733.1 L551.5,733.1 L551.7,714.7 L552.0,713.2 L552.2,727.3 L552.5,736.4 L552.7,712.8 L553.0,711.5 L553.2,735.4 L553.5,730.3 L553.7,714.5 L554.0,705.6 L554.2,730.0 L554.5,724.6 L554.7,707.9 L555.0,700.4 L555.2,726.3 L555.5,723.7 L555.7,703.0 L556.0,695.5 L556.2,717.4 L556.5,715.6 L556.7,687.7 L557.0,683.1 L557.2,714.8 L557.5,712.4 L557.7,675.1 L558.0,665.0 L558.2,687.9 L558.5,683.2 L558.7,647.5 L559.0,220.1 L559.2,683.8 L559.5,694.9 L559.7,657.2 L560.0,664.5 L560.2,707.0 L560.5,718.1 L560.7,669.3 L561.0,683.4 L561.2,719.8 L561.5,718.8 L561.7,693.7 L562.0,688.5 L562.2,724.2 L562.5,720.0 L562.7,696.8 L563.0,704.3 L563.2,725.6 L563.5,730.5 L563.7,707.8 L564.0,710.5 L564.2,723.5 L564.5,727.7 L564.7,715.1 L565.0,713.0 L565.2,728.4 L565.5,729.2 L565.7,712.7 L566.0,716.3 L566.2,733.4 L566.5,728.9 L566.7,717.8 L567.0,715.1 L567.2,728.4 L567.5,733.1 L567.7,716.0 L568.0,719.2 L568.2,735.9 L568.5,727.8 L568.7,720.6 L569.0,718.8 L569.2,733.6 L569.5,731.7 L569.7,715.6 L570.0,711.9 L570.2,729.2 L570.5,734.7 L570.7,722.3 L571.0,716.8 L571.2,731.0 L571.5,733.4 L571.7,719.9 L572.0,716.6 L572.2,731.5 L572.5,729.9 L572.7,712.9 L573.0,718.8 L573.2,729.4 L573.5,730.5 L573.7,717.3 L574.0,719.2 L574.2,732.0 L574.5,736.3 L574.7,717.9 L575.0,714.1 L575.2,733.1 L575.5,729.3 L575.7,715.7 L576.0,720.1 L576.2,738.2 L576.5,732.4 L576.7,715.6 L577.0,718.5 L577.2,738.1 L577.5,733.5 L577.7,713.3 L578.0,715.9 L578.2,732.2 L578.5,738.0 L578.7,715.7 L579.0,716.6 L579.2,733.3 L579.5,731.4 L579.7,710.9 L580.0,716.8 L580.2,731.5 L580.5,733.9 L580.7,716.9 L581.0,712.7 L581.2,740.2 L581.5,728.5 L581.7,722.7 L582.0,717.7 L582.2,736.7 L582.5,730.1 L582.7,720.8 L583.0,716.3 L583.2,731.1 L583.5,731.3 L583.7,718.1 L584.0,719.3 L584.2,732.7 L584.5,732.2 L584.7,719.1 L585.0,718.8 L585.2,735.5 L585.5,739.3 L585.7,721.4 L586.0,717.9 L586.2,732.2 L586.5,736.4 L586.7,718.0 L587.0,715.8 L587.2,729.8 L587.5,733.2 L587.7,717.2 L588.0,719.6 L588.2,735.8 L588.5,730.2 L588.7,715.7 L589.0,714.4 L589.2,736.3 L589.5,735.6 L589.7,722.0 L590.0,713.9 L590.2,743.5 L590.5,731.8 L590.7,719.8 L591.0,721.3 L591.2,730.4 L591.5,734.8 L591.7,714.8 L592.0,719.9 L592.2,732.5 L592.5,736.8 L592.7,717.3 L593.0,718.0 L593.2,735.1 L593.5,736.3 L593.7,719.4 L594.0,717.6 L594.2,732.5 L594.5,742.7 L594.7,718.0 L595.0,718.8 L595.2,736.4 L595.5,730.1 L595.7,718.3 L596.0,717.9 L596.2,738.9 L596.5,738.6 L596.7,720.5 L597.0,714.2 L597.2,734.9 L597.5,728.9 L597.7,718.4 L598.0,714.2 L598.2,728.6 L598.5,732.7 L598.7,710.4 L599.0,722.5 L599.2,735.8 L599.5,741.9 L599.7,721.9 L600.0,716.7 L600.2,735.8 L600.5,737.7 L600.7,719.8 L601.0,721.8 L601.2,736.9 L601.5,737.9 L601.7,715.7 L602.0,712.5 L602.2,738.7 L602.5,732.3 L602.7,717.8 L603.0,720.0 L603.2,739.6 L603.5,732.7 L603.7,718.2 L604.0,716.6 L604.2,738.1 L604.5,733.5 L604.7,712.1 L605.0,711.8 L605.2,734.1 L605.5,733.9 L605.7,719.0 L606.0,718.0 L606.2,739.6 L606.5,732.8 L606.7,720.4 L607.0,719.3 L607.2,730.2 L607.5,733.2 L607.7,721.2 L608.0,721.4 L608.2,735.3 L608.5,735.9 L608.7,717.3 L609.0,723.0 L609.2,737.8 L609.5,735.3 L609.7,715.7 L610.0,716.6 L610.2,732.0 L610.5,743.6 L610.7,716.1 L611.0,719.2 L611.2,731.2 L611.5,731.0 L611.7,720.8 L612.0,717.4 L612.2,732.6 L612.5,733.7 L612.7,721.9 L613.0,714.9 L613.2,730.8 L613.5,736.3 L613.7,717.6 L614.0,718.0 L614.2,738.3 L614.5,733.4 L614.7,718.1 L615.0,715.8 L615.2,729.7 L615.5,737.1 L615.7,720.9 L616.0,713.3 L616.2,738.2 L616.5,733.0 L616.7,717.1 L617.0,721.1 L617.2,736.5 L617.5,731.4 L617.7,712.0 L618.0,715.5 L618.2,743.7 L618.5,732.4 L618.7,719.0 L619.0,718.6 L619.2,732.6 L619.5,734.3 L619.7,718.6 L620.0,715.2 L620.2,734.0 L620.5,733.5 L620.7,721.0 L621.0,721.0 L621.2,735.1 L621.5,735.3 L621.7,720.3 L622.0,718.4 L622.2,733.5 L622.5,735.5 L622.7,714.0 L623.0,720.4 L623.2,739.8 L623.5,734.7 L623.7,716.3 L624.0,717.4 L624.2,729.7 L624.5,736.2 L624.7,717.5 L625.0,717.1 L625.2,728.4 L625.5,737.7 L625.7,722.6 L626.0,721.9 L626.2,737.5 L626.5,731.3 L626.7,715.7 L627.0,715.7 L627.2,728.8 L627.5,729.8 L627.7,721.0 L628.0,721.1 L628.2,736.6 L628.5,736.2 L628.7,719.5 L629.0,650.8 L629.2,730.9 L629.5,737.3 L629.7,720.5 L630.0,715.8 L630.2,747.1 L630.5,734.8 L630.7,721.5 L631.0,715.6 L631.2,740.1 L631.5,733.7 L631.7,723.0 L632.0,720.7 L632.2,729.3 L632.5,732.2 L632.7,717.5 L633.0,717.9 L633.2,729.0 L633.5,734.0 L633.7,717.7 L634.0,717.6 L634.2,739.8 L634.5,734.3 L634.7,718.6 L635.0,717.3 L635.2,730.6 L635.5,731.2 L635.7,718.9 L636.0,717.2 L636.2,739.6 L636.5,734.6 L636.7,716.9 L637.0,721.9 L637.2,734.7 L637.5,743.9 L637.7,715.5 L638.0,722.2 L638.2,736.6 L638.5,732.6 L638.7,718.9 L639.0,713.8 L639.2,732.6 L639.5,739.3 L639.7,715.1 L640.0,714.9 L640.2,731.0 L640.5,732.7 L640.7,715.1 L641.0,721.4 L641.2,730.3 L641.5,734.4 L641.7,719.0 L642.0,720.0 L642.2,737.1 L642.5,733.0 L642.7,717.2 L643.0,717.9 L643.2,743.0 L643.5,729.9 L643.7,717.5 L644.0,716.1 L644.2,733.2 L644.5,740.5 L644.7,719.3 L645.0,714.1 L645.2,732.2 L645.5,734.1 L645.7,719.1 L646.0,721.4 L646.2,737.1 L646.5,730.3 L646.7,718.9 L647.0,723.3 L647.2,734.6 L647.5,731.5 L647.7,718.2 L648.0,720.0 L648.2,730.9 L648.5,735.6 L648.7,724.2 L649.0,715.6 L649.2,734.0 L649.5,731.6 L649.7,714.7 L650.0,719.1 L650.2,738.0 L650.5,731.6 L650.7,717.4 L651.0,719.4 L651.2,744.1 L651.5,733.6 L651.7,722.1 L652.0,717.4 L652.2,731.4 L652.5,739.2 L652.7,723.0 L653.0,721.3 L653.2,738.1 L653.5,738.0 L653.7,717.5 L654.0,715.4 L654.2,736.1 L654.5,725.8 L654.7,717.7 L655.0,714.9 L655.2,729.6 L655.5,732.9 L655.7,716.7 L656.0,721.0 L656.2,737.1 L656.5,741.1 L656.7,716.9 L657.0,720.6 L657.2,730.4 L657.5,742.6 L657.7,720.7 L658.0,716.5 L658.2,739.3 L658.5,731.3 L658.7,718.4 L659.0,722.9 L659.2,734.3 L659.5,737.1 L659.7,716.6 L660.0,717.6 L660.2,733.7 L660.5,738.3 L660.7,718.3 L661.0,720.6 L661.2,733.8 L661.5,730.2 L661.7,720.0 L662.0,722.5 L662.2,736.8 L662.5,740.5 L662.7,723.6 L663.0,718.4 L663.2,734.0 L663.5,739.1 L663.7,720.4 L664.0,715.7 L664.2,735.2 L664.5,736.9 L664.7,718.8 L665.0,722.5 L665.2,737.2 L665.5,732.6 L665.7,717.6 L666.0,724.6 L666.2,732.2 L666.5,736.5 L666.7,717.8 L667.0,717.5 L667.2,733.2 L667.5,729.2 L667.7,719.7 L668.0,717.2 L668.2,733.2 L668.5,738.3 L668.7,717.5 L669.0,718.9 L669.2,737.0 L669.5,731.8 L669.7,721.4 L670.0,719.5 L670.2,735.9 L670.5,734.1 L670.7,717.0 L671.0,725.4 L671.2,736.2 L671.5,732.9 L671.7,716.3 L672.0,721.5 L672.2,735.7 L672.5,741.3 L672.7,721.3 L673.0,716.7 L673.2,744.5 L673.5,737.0 L673.7,717.5 L674.0,718.0 L674.2,737.9 L674.5,729.9 L674.7,710.4 L675.0,718.3 L675.2,738.4 L675.5,743.7 L675.7,720.8 L676.0,720.2 L676.2,737.0 L676.5,731.5 L676.7,721.0 L677.0,721.9 L677.2,741.6 L677.5,736.4 L677.7,719.7 L678.0,717.6 L678.2,733.5 L678.5,731.3 L678.7,720.0 L679.0,716.5 L679.2,732.5 L679.5,735.1 L679.7,723.9 L680.0,719.2 L680.2,733.3 L680.5,737.9 L680.7,716.2 L681.0,722.9 L681.2,744.4 L681.5,727.1 L681.7,721.9 L682.0,715.3 L682.2,744.4 L682.5,741.8 L682.7,715.2 L683.0,714.7 L683.2,735.0 L683.5,736.1 L683.7,722.4 L684.0,719.9 L684.2,734.6 L684.5,729.1 L684.7,718.4 L685.0,715.5 L685.2,737.4 L685.5,741.2 L685.7,716.8 L686.0,716.5 L686.2,734.7 L686.5,733.0 L686.7,720.5 L687.0,722.0 L687.2,736.8 L687.5,740.0 L687.7,720.9 L688.0,717.3 L688.2,732.5 L688.5,736.9 L688.7,718.6 L689.0,721.2 L689.2,735.3 L689.5,730.8 L689.7,717.1 L690.0,719.3 L690.2,737.0 L690.5,732.4 L690.7,720.2 L691.0,721.8 L691.2,741.9 L691.5,733.2 L691.7,718.5 L692.0,721.5 L692.2,735.1 L692.5,738.1 L692.7,720.1 L693.0,718.8 L693.2,733.6 L693.5,743.9 L693.7,719.0 L694.0,716.8 L694.2,736.3 L694.5,741.7 L694.7,717.8 L695.0,719.4 L695.2,735.5 L695.5,738.3 L695.7,719.9 L696.0,719.6 L696.2,733.7 L696.5,733.0 L696.7,722.2 L697.0,719.7 L697.2,737.4 L697.5,735.3 L697.7,719.8 L698.0,715.5 L698.2,736.6 L698.5,744.9 L698.7,714.2 L699.0,663.6 L699.2,730.7 L699.5,732.1 L699.7,643.4 L700.0,722.4 L700.2,745.0 L700.5,740.0 L700.7,723.6 L701.0,717.2 L701.2,733.0 L701.5,734.3 L701.7,716.5 L702.0,717.9 L702.2,736.8 L702.5,737.6 L702.7,714.6 L703.0,720.7 L703.2,730.5 L703.5,734.6 L703.7,715.2 L704.0,720.5 L704.2,729.9 L704.5,735.0 L704.7,723.3 L705.0,721.1 L705.2,743.0 L705.5,735.5 L705.7,718.8 L706.0,717.5 L706.2,730.3 L706.5,730.7 L706.7,719.3 L707.0,723.3 L707.2,745.1 L707.5,739.9 L707.7,717.0 L708.0,723.2 L708.2,735.5 L708.5,741.3 L708.7,720.5 L709.0,719.8 L709.2,731.8 L709.5,736.4 L709.7,716.5 L710.0,717.3 L710.2,737.2 L710.5,741.7 L710.7,720.7 L711.0,723.4 L711.2,739.2 L711.5,734.8 L711.7,719.7 L712.0,720.2 L712.2,737.4 L712.5,733.3 L712.7,721.9 L713.0,713.7 L713.2,727.0 L713.5,735.3 L713.7,719.1 L714.0,718.3 L714.2,735.0 L714.5,738.6 L714.7,718.6 L715.0,721.5 L715.2,733.7 L715.5,732.5 L715.7,720.8 L716.0,718.4 L716.2,740.8 L716.5,734.5 L716.7,722.7 L717.0,716.0 L717.2,741.7 L717.5,738.4 L717.7,717.6 L718.0,715.5 L718.2,733.4 L718.5,732.0 L718.7,718.7 L719.0,723.5 L719.2,732.4 L719.5,735.2 L719.7,717.1 L720.0,722.4 L720.2,740.7 L720.5,735.7 L720.7,720.1 L721.0,715.2 L721.2,734.7 L721.5,739.5 L721.7,719.9 L722.0,719.6 L722.2,735.2 L722.5,733.3 L722.7,722.6 L723.0,721.8 L723.2,737.2 L723.5,742.0 L723.7,717.6 L724.0,716.8 L724.2,740.4 L724.5,736.6 L724.7,720.1 L725.0,718.4 L725.2,732.8 L725.5,736.2 L725.7,718.6 L726.0,715.0 L726.2,735.4 L726.5,735.8 L726.7,719.7 L727.0,719.7 L727.2,741.2 L727.5,735.7 L727.7,719.9 L728.0,719.6 L728.2,733.3 L728.5,732.7 L728.7,719.1 L729.0,721.8 L729.2,734.4 L729.5,740.3 L729.7,719.2 L730.0,720.7 L730.2,735.2 L730.5,734.8 L730.7,717.8 L731.0,716.7 L731.2,734.0 L731.5,740.0 L731.7,716.5 L732.0,718.9 L732.2,737.9 L732.5,735.8 L732.7,718.1 L733.0,719.7 L733.2,734.1 L733.5,738.6 L733.7,719.8 L734.0,722.0 L734.2,741.0 L734.5,736.2 L734.7,721.5 L735.0,720.5 L735.2,730.5 L735.5,739.7 L735.7,720.0 L736.0,716.1 L736.2,735.5 L736.5,735.2 L736.7,714.5 L737.0,723.9 L737.2,742.0 L737.5,732.6 L737.7,718.2 L738.0,715.6 L738.2,731.5 L738.5,731.2 L738.7,719.2 L739.0,724.6 L739.2,742.4 L739.5,735.2 L739.7,720.7 L740.0,722.2 L740.2,734.7 L740.5,736.4 L740.7,720.9 L741.0,723.6 L741.2,734.4 L741.5,740.6 L741.7,721.6 L742.0,719.6 L742.2,738.6 L742.5,734.0 L742.7,722.6 L743.0,717.8 L743.2,741.9 L743.5,732.5 L743.7,719.7 L744.0,722.7 L744.2,738.1 L744.5,734.0 L744.7,721.8 L745.0,722.8 L745.2,735.4 L745.5,740.5 L745.7,722.4 L746.0,718.5 L746.2,737.6 L746.5,731.9 L746.7,719.9 L747.0,719.4 L747.2,738.4 L747.5,738.0 L747.7,723.1 L748.0,716.9 L748.2,737.8 L748.5,737.3 L748.7,722.5 L749.0,723.6 L749.2,734.6 L749.5,734.2 L749.7,720.1 L750.0,720.3 L750.2,744.2 L750.5,732.5 L750.7,721.2 L751.0,721.6 L751.2,738.5 L751.5,736.1 L751.7,723.4 L752.0,720.0 L752.2,730.2 L752.5,732.7 L752.7,720.7 L753.0,713.0 L753.2,729.9 L753.5,734.5 L753.7,722.1 L754.0,715.7 L754.2,732.8 L754.5,738.0 L754.7,723.7 L755.0,715.5 L755.2,736.5 L755.5,735.7 L755.7,716.3 L756.0,718.8 L756.2,736.1 L756.5,730.6 L756.7,718.8 L757.0,722.9 L757.2,740.9 L757.5,742.4 L757.7,722.3 L758.0,720.3 L758.2,734.8 L758.5,737.4 L758.7,720.7 L759.0,720.0 L759.2,732.5 L759.5,730.3 L759.7,716.8 L760.0,719.8 L760.2,740.1 L760.5,736.8 L760.7,724.9 L761.0,724.1 L761.2,745.8 L761.5,731.8 L761.7,715.1 L762.0,721.7 L762.2,728.1 L762.5,738.6 L762.7,719.8 L763.0,717.2 L763.2,736.9 L763.5,733.3 L763.7,722.6 L764.0,719.2 L764.2,740.8 L764.5,732.6 L764.7,715.9 L765.0,718.0 L765.2,736.0 L765.5,735.7 L765.7,720.2 L766.0,716.1 L766.2,734.8 L766.5,730.5 L766.7,718.5 L767.0,714.2 L767.2,734.5 L767.5,731.8 L767.7,721.2 L768.0,716.3 L768.2,734.8 L768.5,740.6 L768.7,718.8 L769.0,720.1 L769.2,736.1 L769.5,743.7 L769.7,717.7 L770.0,725.3 L770.2,739.5 L770.5,736.7 L770.7,721.4 L771.0,716.2 L771.2,735.6 L771.5,732.2 L771.7,717.5 L772.0,722.1 L772.2,737.2 L772.5,737.4 L772.7,722.1 L773.0,725.3 L773.2,735.5 L773.5,735.1 L773.7,720.8 L774.0,720.2 L774.2,735.1 L774.5,735.5 L774.7,725.5 L775.0,722.7 L775.2,733.1 L775.5,734.0 L775.7,723.0 L776.0,716.9 L776.2,734.5 L776.5,734.5 L776.7,715.3 L777.0,721.3 L777.2,733.1 L777.5,736.9 L777.7,722.5 L778.0,721.2 L778.2,740.4 L778.5,734.0 L778.7,721.6 L779.0,717.1 L779.2,738.8 L779.5,733.3 L779.7,725.1 L780.0,717.9 L780.2,733.2 L780.5,734.5 L780.7,721.7 L781.0,719.9 L781.2,734.6 L781.5,735.9 L781.7,717.3 L782.0,716.9 L782.2,735.7 L782.5,737.2 L782.7,719.9 L783.0,721.2 L783.2,731.2 L783.5,737.0 L783.7,713.8 L784.0,722.6 L784.2,739.2 L784.5,740.3 L784.7,719.4 L785.0,722.4 L785.2,740.6 L785.5,733.4 L785.7,715.9 L786.0,720.7 L786.2,733.1 L786.5,736.0 L786.7,717.4 L787.0,719.9 L787.2,735.6 L787.5,736.9 L787.7,721.0 L788.0,718.7 L788.2,741.9 L788.5,731.4 L788.7,719.5 L789.0,719.1 L789.2,737.1 L789.5,737.6 L789.7,715.6 L790.0,719.4 L790.2,730.6 L790.5,736.7 L790.7,718.8 L791.0,722.8 L791.2,731.0 L791.5,739.9 L791.7,719.6 L792.0,717.1 L792.2,730.3 L792.5,731.6 L792.7,720.2 L793.0,717.1 L793.2,730.5 L793.5,737.8 L793.7,722.2 L794.0,721.2 L794.2,742.6 L794.5,734.1 L794.7,723.4 L795.0,717.6 L795.2,734.7 L795.5,735.1 L795.7,722.0 L796.0,724.4 L796.2,732.5 L796.5,736.3 L796.7,717.4 L797.0,716.0 L797.2,737.3 L797.5,743.4 L797.7,721.1 L798.0,721.1 L798.2,740.6 L798.5,738.1 L798.7,720.4 L799.0,719.6 L799.2,737.4 L799.5,734.6 L799.7,719.0 L800.0,722.5 L800.2,737.0 L800.5,738.4 L800.7,725.8 L801.0,720.3 L801.2,736.3 L801.5,738.6 L801.7,724.6 L802.0,720.9 L802.2,737.0 L802.5,737.5 L802.7,721.9 L803.0,722.4 L803.2,731.7 L803.5,738.3 L803.7,723.8 L804.0,719.7 L804.2,732.2 L804.5,737.5 L804.7,721.4 L805.0,720.8 L805.2,739.9 L805.5,732.1 L805.7,717.2 L806.0,723.7 L806.2,735.1 L806.5,744.9 L806.7,720.6 L807.0,718.9 L807.2,738.1 L807.5,731.8 L807.7,722.1 L808.0,723.5 L808.2,739.2 L808.5,733.0 L808.7,722.3 L809.0,722.1 L809.2,740.4 L809.5,738.1 L809.7,722.7 L810.0,721.7 L810.2,733.2 L810.5,738.4 L810.7,723.3 L811.0,717.7 L811.2,737.3 L811.5,744.8 L811.7,720.0 L812.0,717.7 L812.2,737.4 L812.5,730.8 L812.7,721.8 L813.0,721.0 L813.2,736.4 L813.5,736.4 L813.7,721.1 L814.0,720.3 L814.2,741.3 L814.5,738.4 L814.7,721.2 L815.0,716.9 L815.2,735.7 L815.5,739.2 L815.7,721.8 L816.0,721.0 L816.2,734.5 L816.5,733.7 L816.7,715.8 L817.0,720.3 L817.2,733.0 L817.5,734.6 L817.7,720.9 L818.0,719.7 L818.2,741.6 L818.5,742.8 L818.7,719.5 L819.0,721.7 L819.2,734.7 L819.5,742.7 L819.7,721.7 L820.0,723.8 L820.2,731.1 L820.5,736.5 L820.7,719.7 L821.0,719.8 L821.2,744.1 L821.5,738.4 L821.7,720.5 L822.0,721.4 L822.2,736.6 L822.5,734.0 L822.7,720.4 L823.0,721.1 L823.2,737.5 L823.5,734.1 L823.7,717.8 L824.0,722.1 L824.2,733.4 L824.5,745.4 L824.7,720.6 L825.0,718.4 L825.2,733.0 L825.5,740.0 L825.7,721.8 L826.0,721.8 L826.2,737.3 L826.5,735.0 L826.7,721.3 L827.0,719.5 L827.2,733.9 L827.5,735.5 L827.7,722.6 L828.0,717.4 L828.2,735.5 L828.5,744.3 L828.7,722.1 L829.0,720.0 L829.2,736.8 L829.5,730.5 L829.7,719.3 L830.0,712.8 L830.2,738.5 L830.5,736.9 L830.7,715.4 L831.0,722.5 L831.2,733.7 L831.5,734.0 L831.7,719.2 L832.0,717.2 L832.2,733.6 L832.5,743.4 L832.7,718.6 L833.0,717.4 L833.2,739.8 L833.5,731.5 L833.7,717.2 L834.0,715.8 L834.2,732.8 L834.5,740.0 L834.7,720.0 L835.0,723.5 L835.2,734.3 L835.5,734.2 L835.7,718.4 L836.0,719.8 L836.2,737.0 L836.5,739.0 L836.7,719.3 L837.0,722.0 L837.2,742.0 L837.5,730.5 L837.7,718.2 L838.0,722.2 L838.2,733.5 L838.5,731.2 L838.7,722.5 L839.0,723.0 L839.2,745.0 L839.5,736.8 L839.7,641.7 L840.0,719.5 L840.2,737.5 L840.5,740.7 L840.7,716.9 L841.0,723.4 L841.2,736.6 L841.5,742.6 L841.7,718.3 L842.0,722.3 L842.2,739.0 L842.5,745.4 L842.7,718.2 L843.0,719.8 L843.2,734.0 L843.5,735.3 L843.7,720.2 L844.0,723.0 L844.2,737.8 L844.5,734.1 L844.7,721.1 L845.0,715.8 L845.2,734.1 L845.5,735.0 L845.7,718.0 L846.0,720.5 L846.2,734.0 L846.5,732.3 L846.7,720.0 L847.0,717.2 L847.2,733.2 L847.5,732.3 L847.7,721.2 L848.0,719.0 L848.2,730.7 L848.5,740.5 L848.7,722.3 L849.0,721.1 L849.2,730.7 L849.5,734.1 L849.7,719.3 L850.0,718.9 L850.2,735.3 L850.5,732.1 L850.7,717.8 L851.0,723.8 L851.2,740.0 L851.5,731.6 L851.7,719.5 L852.0,719.6 L852.2,737.5 L852.5,731.8 L852.7,721.0 L853.0,720.9 L853.2,737.2 L853.5,734.1 L853.7,718.7 L854.0,720.6 L854.2,731.0 L854.5,735.2 L854.7,712.6 L855.0,717.1 L855.2,734.6 L855.5,735.4 L855.7,723.2 L856.0,725.8 L856.2,737.5 L856.5,732.7 L856.7,719.4 L857.0,720.1 L857.2,739.2 L857.5,734.3 L857.7,719.5 L858.0,719.2 L858.2,735.2 L858.5,740.0 L858.7,719.1 L859.0,717.6 L859.2,734.4 L859.5,740.9 L859.7,716.3 L860.0,718.4 L860.2,735.5 L860.5,743.0 L860.7,715.9 L861.0,717.7 L861.2,731.2 L861.5,727.7 L861.7,715.8 L862.0,720.3 L862.2,736.4 L862.5,735.5 L862.7,721.8 L863.0,718.8 L863.2,730.7 L863.5,733.0 L863.7,716.5 L864.0,717.1 L864.2,737.1 L864.5,729.0 L864.7,718.9 L865.0,719.8 L865.2,735.6 L865.5,733.4 L865.7,718.8 L866.0,723.6 L866.2,732.6 L866.5,731.5 L866.7,719.1 L867.0,714.6 L867.2,738.3 L867.5,735.7 L867.7,720.0 L868.0,717.1 L868.2,739.4 L868.5,737.0 L868.7,722.1 L869.0,722.2 L869.2,740.7 L869.5,736.4 L869.7,718.8 L870.0,722.4 L870.2,737.6 L870.5,744.4 L870.7,718.8 L871.0,717.1 L871.2,732.0 L871.5,741.3 L871.7,721.4 L872.0,721.0 L872.2,740.5 L872.5,746.4 L872.7,715.3 L873.0,717.4 L873.2,744.9 L873.5,738.3 L873.7,720.5 L874.0,717.6 L874.2,733.2 L874.5,735.9 L874.7,717.8 L875.0,719.9 L875.2,734.4 L875.5,733.8 L875.7,718.4 L876.0,719.7 L876.2,733.2 L876.5,734.0 L876.7,717.1 L877.0,719.9 L877.2,736.7 L877.5,743.6 L877.7,717.2 L878.0,723.8 L878.2,741.4 L878.5,734.0 L878.7,720.7 L879.0,715.6 L879.2,735.6 L879.5,736.4 L879.7,721.1 L880.0,720.1 L880.2,735.1 L880.5,734.3 L880.7,718.2 L881.0,715.4 L881.2,734.9 L881.5,733.5 L881.7,720.3 L882.0,724.8 L882.2,735.5 L882.5,730.5 L882.7,718.3 L883.0,719.7 L883.2,733.1 L883.5,733.2 L883.7,717.1 L884.0,720.6 L884.2,732.9 L884.5,734.4 L884.7,715.7 L885.0,722.5 L885.2,733.1 L885.5,742.1 L885.7,718.9 L886.0,720.2 L886.2,736.2 L886.5,738.2 L886.7,723.1 L887.0,720.2 L887.2,730.0 L887.5,740.5 L887.7,720.7 L888.0,719.5 L888.2,735.1 L888.5,731.2 L888.7,716.2 L889.0,720.6 L889.2,733.7 L889.5,736.4 L889.7,719.9 L890.0,719.1 L890.2,731.4 L890.5,736.8 L890.7,719.6 L891.0,717.6 L891.2,744.5 L891.5,736.0 L891.7,717.8 L892.0,718.9 L892.2,739.9 L892.5,728.4 L892.7,717.9 L893.0,720.8 L893.2,738.0 L893.5,736.7 L893.7,720.6 L894.0,718.0 L894.2,743.2 L894.5,730.1 L894.7,715.1 L895.0,720.0 L895.2,730.6 L895.5,738.1 L895.7,718.3 L896.0,722.8 L896.2,729.8 L896.5,734.5 L896.7,717.9 L897.0,716.2 L897.2,737.6 L897.5,740.5 L897.7,718.0 L898.0,722.2 L898.2,737.4 L898.5,733.1 L898.7,721.7 L899.0,722.4 L899.2,736.6 L899.5,738.4 L899.7,718.9 L900.0,718.0 L900.2,738.7 L900.5,735.8 L900.7,721.5 L901.0,715.0 L901.2,736.7 L901.5,735.2 L901.7,723.2 L902.0,714.5 L902.2,732.6 L902.5,735.3 L902.7,718.2 L903.0,716.7 L903.2,734.3 L903.5,738.3 L903.7,718.2 L904.0,717.9 L904.2,735.2 L904.5,735.1 L904.7,722.8 L905.0,717.3 L905.2,740.8 L905.5,739.3 L905.7,714.4 L906.0,720.0 L906.2,731.7 L906.5,740.5 L906.7,719.8 L907.0,719.2 L907.2,730.3 L907.5,731.1 L907.7,715.3 L908.0,718.7 L908.2,738.5 L908.5,736.1 L908.7,718.5 L909.0,716.5 L909.2,731.2 L909.5,738.6 L909.7,718.6 L910.0,707.2 L910.2,738.1 L910.5,734.4 L910.7,719.0 L911.0,722.0 L911.2,740.4 L911.5,734.9 L911.7,714.8 L912.0,720.8 L912.2,732.7 L912.5,735.3 L912.7,721.5 L913.0,719.1 L913.2,730.3 L913.5,733.4 L913.7,716.5 L914.0,719.3 L914.2,727.7 L914.5,731.6 L914.7,717.2 L915.0,720.6 L915.2,730.1 L915.5,728.0 L915.7,716.9 L916.0,720.2 L916.2,731.2 L916.5,729.8 L916.7,718.7 L917.0,719.1 L917.2,740.7 L917.5,739.5 L917.7,720.5 L918.0,719.6 L918.2,731.3 L918.5,737.4 L918.7,720.4 L919.0,722.5 L919.2,735.2 L919.5,729.4 L919.7,715.3 L920.0,708.5 L920.2,735.1 L920.5,734.8 L920.7,715.5 L921.0,718.3 L921.2,733.6 L921.5,733.9 L921.7,722.4 L922.0,720.0 L922.2,730.2 L922.5,739.4 L922.7,718.6 L923.0,723.5 L923.2,734.0 L923.5,742.2 L923.7,722.9 L924.0,717.8 L924.2,738.4 L924.5,737.3 L924.7,720.2 L925.0,720.4 L925.2,732.4 L925.5,727.3 L925.7,716.9 L926.0,712.4 L926.2,743.3 L926.5,729.1 L926.7,716.0 L927.0,718.8 L927.2,736.3 L927.5,743.9 L927.7,723.8 L928.0,720.3 L928.2,735.2 L928.5,731.1 L928.7,717.9 L929.0,722.6 L929.2,733.1 L929.5,731.6 L929.7,719.2 L930.0,719.3 L930.2,736.5 L930.5,737.5 L930.7,721.8 L931.0,716.6 L931.2,728.8 L931.5,736.8 L931.7,717.5 L932.0,715.8 L932.2,731.8 L932.5,743.8 L932.7,716.8 L933.0,717.2 L933.2,730.3 L933.5,731.1 L933.7,718.8 L934.0,716.3 L934.2,731.4 L934.5,733.6 L934.7,718.3 L935.0,718.9 L935.2,741.3 L935.5,740.2 L935.7,722.6 L936.0,718.6 L936.2,740.1 L936.5,730.2 L936.7,715.2 L937.0,716.4 L937.2,733.4 L937.5,729.0 L937.7,716.9 L938.0,716.2 L938.2,733.5 L938.5,733.9 L938.7,719.4 L939.0,724.4 L939.2,737.9 L939.5,736.6 L939.7,718.2 L940.0,717.1 L940.2,734.4 L940.5,741.4 L940.7,713.7 L941.0,717.1 L941.2,738.3 L941.5,741.6 L941.7,719.6 L942.0,714.6 L942.2,732.3 L942.5,729.4 L942.7,720.0 L943.0,717.0 L943.2,730.9 L943.5,734.8 L943.7,714.4 L944.0,720.3 L944.2,734.9 L944.5,729.3 L944.7,720.0 L945.0,716.8 L945.2,733.7 L945.5,736.1 L945.7,718.9 L946.0,712.9 L946.2,732.2 L946.5,735.3 L946.7,717.8 L947.0,718.5 L947.2,730.1 L947.5,732.7 L947.7,718.9 L948.0,715.4 L948.2,734.0 L948.5,740.5 L948.7,721.1 L949.0,720.0 L949.2,740.9 L949.5,730.1 L949.7,719.7 L950.0,716.8 L950.2,732.0 L950.5,735.3 L950.7,714.7 L951.0,720.0 L951.2,729.5 L951.5,734.3 L951.7,721.1 L952.0,717.8 L952.2,735.8 L952.5,737.0 L952.7,716.5 L953.0,719.7 L953.2,733.1 L953.5,737.5 L953.7,717.1 L954.0,719.2 L954.2,733.3 L954.5,732.7 L954.7,719.0 L955.0,719.0 L955.2,743.6 L955.5,735.9 L955.7,717.7 L956.0,716.8 L956.2,735.4 L956.5,732.1 L956.7,718.2 L957.0,719.3 L957.2,732.6 L957.5,736.4 L957.7,716.8 L958.0,714.0 L958.2,732.3 L958.5,726.0 L958.7,717.9 L959.0,719.0 L959.2,732.9 L959.5,730.5 L959.7,714.1 L960.0,716.1 L960.2,731.9 L960.5,734.4 L960.7,718.4 L961.0,715.8 L961.2,735.6 L961.5,733.8 L961.7,717.0 L962.0,722.7 L962.2,736.3 L962.5,731.3 L962.7,716.3 L963.0,717.4 L963.2,742.6 L963.5,742.1 L963.7,718.1 L964.0,717.7 L964.2,738.4 L964.5,734.9 L964.7,719.8 L965.0,713.1 L965.2,743.1 L965.5,736.1 L965.7,715.1 L966.0,718.9 L966.2,734.3 L966.5,729.4 L966.7,714.6 L967.0,721.0 L967.2,734.5 L967.5,737.6 L967.7,716.9 L968.0,718.4 L968.2,738.1 L968.5,725.6 L968.7,715.3 L969.0,717.3 L969.2,732.1 L969.5,735.9 L969.7,719.4 L970.0,718.9 L970.2,734.7 L970.5,738.3 L970.7,716.4 L971.0,718.8 L971.2,733.1 L971.5,730.6 L971.7,720.4 L972.0,717.3 L972.2,740.5 L972.5,732.0 L972.7,718.2 L973.0,716.1 L973.2,737.2 L973.5,733.3 L973.7,720.3 L974.0,719.2 L974.2,739.6 L974.5,730.5 L974.7,717.5 L975.0,717.5 L975.2,730.7 L975.5,732.9 L975.7,712.1 L976.0,722.5 L976.2,733.9 L976.5,739.2 L976.7,721.9 L977.0,719.2 L977.2,734.9 L977.5,738.1 L977.7,716.4 L978.0,715.5 L978.2,734.2 L978.5,735.6 L978.7,718.6 L979.0,716.2 L979.2,729.9 L979.5,738.7 L979.7,715.0 L980.0,717.3 L980.2,734.5 L980.5,731.5 L980.7,715.2 L981.0,717.4 L981.2,730.4 L981.5,740.5 L981.7,713.2 L982.0,721.3 L982.2,734.9 L982.5,730.1 L982.7,719.2 L983.0,719.4 L983.2,736.7 L983.5,729.5 L983.7,707.5 L984.0,715.7 L984.2,732.9 L984.5,728.0 L984.7,718.6 L985.0,720.7 L985.2,734.5 L985.5,736.6 L985.7,716.2 L986.0,718.3 L986.2,731.0 L986.5,734.4 L986.7,713.2 L987.0,713.7 L987.2,732.2 L987.5,742.4 L987.7,721.5 L988.0,717.6 L988.2,738.8 L988.5,732.9 L988.7,718.3 L989.0,720.8 L989.2,739.8 L989.5,728.9 L989.7,722.3 L990.0,720.0 L990.2,737.8 L990.5,725.9 L990.7,718.8 L991.0,717.0 L991.2,738.0 L991.5,734.7 L991.7,719.1 L992.0,714.9 L992.2,729.9 L992.5,727.8 L992.7,718.7 L993.0,713.6 L993.2,733.4 L993.5,738.6 L993.7,721.1 L994.0,714.9 L994.2,730.0 L994.5,733.0 L994.7,719.2 L995.0,717.6 L995.2,739.9 L995.5,729.8 L995.7,715.5 L996.0,711.7 L996.2,731.7 L996.5,734.0 L996.7,721.3 L997.0,717.8 L997.2,735.4 L997.5,734.4 L997.7,718.9 L998.0,715.1 L998.2,737.6 L998.5,730.6 L998.7,718.4 L999.0,719.4 L999.2,741.7 L999.5,738.1 L999.7,714.5 L1000.0,719.2 L1000.2,734.1 L1000.5,736.2 L1000.7,713.2 L1001.0,723.4 L1001.2,732.9 L1001.5,743.5 L1001.7,717.1 L1002.0,717.3 L1002.2,738.7 L1002.5,730.8 L1002.7,722.8 L1003.0,714.2 L1003.2,735.4 L1003.5,737.0 L1003.7,718.1 L1004.0,717.3 L1004.2,728.6 L1004.5,731.9 L1004.7,721.7 L1005.0,719.7 L1005.2,729.0 L1005.5,742.5 L1005.7,716.7 L1006.0,720.2 L1006.2,739.2 L1006.5,735.7 L1006.7,717.9 L1007.0,718.9 L1007.2,740.6 L1007.5,736.5 L1007.7,715.9 L1008.0,717.6 L1008.2,732.4 L1008.5,732.9 L1008.7,720.9 L1009.0,710.4 L1009.2,732.6 L1009.5,732.1 L1009.7,712.7 L1010.0,715.7 L1010.2,726.3 L1010.5,739.2 L1010.7,722.3 L1011.0,714.4 L1011.2,737.4 L1011.5,733.8 L1011.7,718.0 L1012.0,714.2 L1012.2,731.3 L1012.5,735.2 L1012.7,721.9 L1013.0,716.7 L1013.2,733.2 L1013.5,741.6 L1013.7,717.6 L1014.0,714.8 L1014.2,734.0 L1014.5,735.1 L1014.7,714.5 L1015.0,714.5 L1015.2,733.1 L1015.5,739.0 L1015.7,715.4 L1016.0,717.4 L1016.2,737.8 L1016.5,734.2 L1016.7,723.5 L1017.0,723.1 L1017.2,740.1 L1017.5,737.8 L1017.7,716.6 L1018.0,721.2 L1018.2,734.5 L1018.5,743.4 L1018.7,714.0 L1019.0,717.5 L1019.2,733.3 L1019.5,731.5 L1019.7,717.3 L1020.0,716.6 L1020.2,738.0 L1020.5,731.9 L1020.7,717.7 L1021.0,717.9 L1021.2,731.8 L1021.5,733.2 L1021.7,718.2 L1022.0,720.5 L1022.2,728.9 L1022.5,738.3 L1022.7,722.9 L1023.1,716.0 L1023.2,731.0 L1023.6,738.3 L1023.7,716.4 L1024.1,708.3 L1024.2,740.8 L1024.6,730.0 L1024.7,713.1 L1025.1,721.6 L1025.2,731.7 L1025.6,734.9 L1025.7,715.3 L1026.1,717.9 L1026.2,739.1 L1026.6,733.7 L1026.7,719.4 L1027.1,722.0 L1027.2,729.8 L1027.6,737.8 L1027.7,721.3 L1028.1,715.3 L1028.2,736.1 L1028.6,737.6 L1028.7,718.2 L1029.1,722.0 L1029.2,738.1 L1029.6,735.2 L1029.7,718.1 L1030.1,719.2 L1030.2,727.3 L1030.6,729.2 L1030.7,719.6 L1031.1,722.3 L1031.2,737.5 L1031.6,736.8 L1031.7,715.1 L1032.1,721.8 L1032.2,735.1 L1032.6,734.9 L1032.7,719.5 L1033.1,721.7 L1033.2,735.8 L1033.6,743.9 L1033.7,718.9 L1034.1,715.9 L1034.2,730.5 L1034.6,728.8 L1034.7,717.3 L1035.1,714.3 L1035.2,736.2 L1035.6,735.5 L1035.7,718.6 L1036.1,717.7 L1036.2,730.1 L1036.6,730.9 L1036.7,718.7 L1037.1,723.1 L1037.2,736.1 L1037.6,732.0 L1037.7,715.2 L1038.1,715.3 L1038.2,734.4 L1038.6,734.2 L1038.7,719.5 L1039.1,717.2 L1039.2,732.6 L1039.6,735.5 L1039.7,721.3 L1040.1,713.5 L1040.2,738.8 L1040.6,727.4 L1040.7,718.2 L1041.1,718.2 L1041.2,735.2 L1041.6,732.8 L1041.7,721.8 L1042.1,720.5 L1042.2,735.7 L1042.6,729.7 L1042.7,718.3 L1043.1,720.7 L1043.2,733.2 L1043.6,731.5 L1043.7,721.8 L1044.1,719.1 L1044.2,735.2 L1044.6,736.7 L1044.7,717.5 L1045.1,718.7 L1045.2,731.6 L1045.6,735.1 L1045.7,716.4 L1046.1,720.5 L1046.2,732.4 L1046.6,733.4 L1046.7,720.5 L1047.1,721.6 L1047.2,733.1 L1047.6,726.7 L1047.7,717.3 L1048.1,720.2 L1048.2,733.1 L1048.6,741.8 L1048.7,718.4 L1049.1,720.7 L1049.2,731.7 L1049.6,736.4 L1049.7,717.4 L1050.1,719.1 L1050.2,737.8 L1050.6,730.3 L1050.7,717.9 L1051.1,716.9 L1051.2,735.5 L1051.6,737.0 L1051.7,715.0 L1052.1,716.5 L1052.2,733.3 L1052.6,730.0 L1052.7,720.3 L1053.1,714.7 L1053.2,737.2 L1053.6,738.6 L1053.7,716.5 L1054.1,718.7 L1054.2,734.4 L1054.6,732.3 L1054.7,717.8 L1055.1,718.9 L1055.2,733.3 L1055.6,737.4 L1055.7,721.3 L1056.1,715.1 L1056.2,732.9 L1056.6,731.3 L1056.7,720.1 L1057.1,716.5 L1057.2,729.9 L1057.6,734.6 L1057.7,716.8 L1058.1,718.5 L1058.2,738.1 L1058.6,732.7 L1058.7,720.6 L1059.1,721.8 L1059.2,738.0 L1059.6,740.8 L1059.7,721.6 L1060.1,714.8 L1060.2,730.3 L1060.6,740.1 L1060.7,721.1 L1061.1,716.3 L1061.2,742.6 L1061.6,732.7 L1061.7,716.8 L1062.1,717.8 L1062.2,736.4 L1062.6,727.6 L1062.7,716.1 L1063.1,720.7 L1063.2,735.9 L1063.6,735.5 L1063.7,720.4 L1064.1,718.0 L1064.2,729.5 L1064.6,732.3 L1064.7,719.0 L1065.1,718.6 L1065.2,732.4 L1065.6,739.2 L1065.7,721.3 L1066.1,721.5 L1066.2,742.0 L1066.6,733.1 L1066.7,717.6 L1067.1,722.5 L1067.2,737.0 L1067.6,733.0 L1067.7,717.2 L1068.1,720.7 L1068.2,735.4 L1068.6,738.3 L1068.7,720.0 L1069.1,720.0 L1069.2,736.5 L1069.6,743.1 L1069.7,717.0 L1070.1,714.9 L1070.2,733.9 L1070.6,734.1 L1070.7,720.9 L1071.1,720.8 L1071.2,733.8 L1071.6,743.2 L1071.7,718.2 L1072.1,722.5 L1072.2,741.1 L1072.6,738.1 L1072.7,720.1 L1073.1,721.1 L1073.2,730.4 L1073.6,736.5 L1073.7,721.9 L1074.1,718.5 L1074.2,733.5 L1074.6,734.5 L1074.7,720.1 L1075.1,717.1 L1075.2,732.9 L1075.6,730.8 L1075.7,717.6 L1076.1,715.9 L1076.2,739.5 L1076.6,734.1 L1076.7,717.3 L1077.1,716.5 L1077.2,735.7 L1077.6,734.1 L1077.7,720.4 L1078.1,717.7 L1078.2,736.5 L1078.6,729.5 L1078.7,722.1 L1079.1,718.6 L1079.2,734.8 L1079.6,755.5 L1079.7,715.5 L1080.1,716.0 L1080.2,734.0 L1080.6,739.1 L1080.7,720.3 L1081.1,718.5 L1081.2,737.8 L1081.6,726.6 L1081.7,719.1 L1082.1,721.0 L1082.2,737.2 L1082.6,729.5 L1082.7,715.4 L1083.1,718.1 L1083.2,737.4 L1083.6,737.7 L1083.7,714.7 L1084.1,719.2 L1084.2,737.6 L1084.6,735.1 L1084.7,715.8 L1085.1,720.3 L1085.2,734.4 L1085.6,741.7 L1085.7,723.6 L1086.1,716.9 L1086.2,734.7 L1086.6,736.3 L1086.7,722.2 L1087.1,720.8 L1087.2,735.6 L1087.6,743.1 L1087.7,718.7 L1088.1,720.7 L1088.2,738.0 L1088.6,744.9 L1088.7,717.8 L1089.1,718.9 L1089.2,733.3 L1089.6,735.6 L1089.7,721.1 L1090.1,715.6 L1090.2,734.4 L1090.6,736.9 L1090.7,720.5 L1091.1,717.6 L1091.2,733.6 L1091.6,743.0 L1091.7,721.5 L1092.1,720.5 L1092.2,733.5 L1092.6,740.7 L1092.7,717.7 L1093.1,719.6 L1093.2,733.5 L1093.6,738.4 L1093.7,722.2 L1094.1,718.1 L1094.2,736.0 L1094.6,734.4 L1094.7,717.9 L1095.1,718.7 L1095.2,738.2 L1095.6,731.4 L1095.7,717.0 L1096.1,721.2 L1096.2,739.4 L1096.6,731.0 L1096.7,721.2 L1097.1,721.0 L1097.2,736.1 L1097.6,736.4 L1097.7,718.9 L1098.1,718.5 L1098.2,733.7 L1098.6,732.0 L1098.7,719.3 L1099.1,718.3 L1099.2,740.6 L1099.6,740.1 L1099.7,718.4 L1100.1,717.9 L1100.2,745.1 L1100.6,736.5 L1100.7,717.5 L1101.1,715.1 L1101.2,733.0 L1101.6,737.1 L1101.7,722.0 L1102.1,721.5 L1102.2,733.7 L1102.6,735.8 L1102.7,717.2 L1103.1,717.0 L1103.2,733.1 L1103.6,737.2 L1103.7,719.6 L1104.1,720.0 L1104.2,728.9 L1104.6,734.9 L1104.7,722.7 L1105.1,716.5 L1105.2,744.4 L1105.6,729.9 L1105.7,720.9 L1106.1,718.7 L1106.2,740.9 L1106.6,739.3 L1106.7,714.7 L1107.1,718.3 L1107.2,733.8 L1107.6,736.3 L1107.7,717.2 L1108.1,717.6 L1108.2,737.5 L1108.6,735.5 L1108.7,715.3 L1109.1,721.2 L1109.2,732.4 L1109.6,737.2 L1109.7,717.2 L1110.1,716.2 L1110.2,734.4 L1110.6,739.1 L1110.7,719.5 L1111.1,723.9 L1111.2,731.0 L1111.6,743.8 L1111.7,719.4 L1112.1,716.2 L1112.2,735.9 L1112.6,734.7 L1112.7,713.9 L1113.1,720.6 L1113.2,736.7 L1113.6,734.4 L1113.7,720.8 L1114.1,722.3 L1114.2,739.2 L1114.6,735.4 L1114.7,720.5 L1115.1,721.0 L1115.2,737.0 L1115.6,733.8 L1115.7,723.8 L1116.1,720.5 L1116.2,734.6 L1116.6,736.2 L1116.7,717.4 L1117.1,719.3 L1117.2,735.2 L1117.6,737.3 L1117.7,718.6 L1118.1,722.1 L1118.2,740.6 L1118.6,738.0 L1118.7,721.1 L1119.1,721.9 L1119.2,734.5 L1119.6,736.2 L1119.7,716.6 L1120.1,693.0 L1120.2,731.6 L1120.6,735.8 L1120.7,672.7 L1121.1,719.6 L1121.2,729.4 L1121.6,733.0 L1121.7,718.8 L1122.1,717.0 L1122.2,732.4 L1122.6,743.7 L1122.7,721.9 L1123.1,717.4 L1123.2,737.1 L1123.6,731.0 L1123.7,716.7 L1124.1,719.4 L1124.2,731.4 L1124.6,736.1 L1124.7,719.4 L1125.1,720.3 L1125.2,734.4 L1125.6,738.4 L1125.7,717.0 L1126.1,721.0 L1126.2,741.6 L1126.6,733.7 L1126.7,718.9 L1127.1,720.1 L1127.2,737.7 L1127.6,735.1 L1127.7,722.4 L1128.1,719.8 L1128.2,730.2 L1128.6,739.4 L1128.7,720.6 L1129.1,720.2 L1129.2,736.8 L1129.6,737.7 L1129.7,717.6 L1130.1,720.3 L1130.2,735.0 L1130.6,734.1 L1130.7,720.7 L1131.1,720.2 L1131.2,736.0 L1131.6,734.5 L1131.7,722.7 L1132.1,718.3 L1132.2,731.8 L1132.6,736.9 L1132.7,719.4 L1133.1,718.4 L1133.2,735.6 L1133.6,734.2 L1133.7,712.1 L1134.1,716.6 L1134.2,731.4 L1134.6,740.4 L1134.7,722.1 L1135.1,721.5 L1135.2,737.6 L1135.6,731.7 L1135.7,719.8 L1136.1,716.9 L1136.2,737.2 L1136.6,739.9 L1136.7,719.4 L1137.1,720.0 L1137.2,750.4 L1137.6,744.2 L1137.7,719.3 L1138.1,720.4 L1138.2,743.9 L1138.6,732.9 L1138.7,719.6 L1139.1,718.7 L1139.2,734.9 L1139.6,735.5 L1139.7,718.2 L1140.1,721.5 L1140.2,739.9 L1140.6,733.3 L1140.7,717.0 L1141.1,718.5 L1141.2,733.8 L1141.6,738.0 L1141.7,718.6 L1142.1,719.8 L1142.2,731.8 L1142.6,741.7 L1142.7,720.0 L1143.1,717.8 L1143.2,734.3 L1143.6,734.3 L1143.7,722.0 L1144.1,720.8 L1144.2,741.6 L1144.6,737.1 L1144.7,716.5 L1145.1,720.8 L1145.2,737.7 L1145.6,730.3 L1145.7,723.3 L1146.1,719.8 L1146.2,738.5 L1146.6,734.8 L1146.7,717.6 L1147.1,721.6 L1147.2,736.5 L1147.6,735.8 L1147.7,722.3 L1148.1,717.7 L1148.2,737.4 L1148.6,737.8 L1148.7,718.9 L1149.1,723.0 L1149.2,745.8 L1149.6,731.3 L1149.7,718.2 L1150.1,721.9 L1150.2,734.7 L1150.6,740.7 L1150.7,721.7 L1151.1,719.4 L1151.2,737.6 L1151.6,732.4 L1151.7,720.7 L1152.1,720.8 L1152.2,739.4 L1152.6,737.8 L1152.7,721.7 L1153.1,713.7 L1153.2,739.9 L1153.6,736.2 L1153.7,716.4 L1154.1,722.0 L1154.2,734.9 L1154.6,731.6 L1154.7,714.0 L1155.1,720.9 L1155.2,737.0 L1155.6,739.1 L1155.7,721.4 L1156.1,723.0 L1156.2,733.0 L1156.6,734.6 L1156.7,720.5 L1157.1,717.7 L1157.2,735.0 L1157.6,736.3 L1157.7,718.9 L1158.1,721.4 L1158.2,736.3 L1158.6,733.5 L1158.7,723.1 L1159.1,722.0 L1159.2,736.3 L1159.6,733.1 L1159.7,722.5 L1160.1,720.1 L1160.2,737.4 L1160.6,738.0 L1160.7,721.9 L1161.1,716.2 L1161.2,738.4 L1161.6,730.7 L1161.7,723.8 L1162.1,714.8 L1162.2,736.6 L1162.6,737.3 L1162.7,719.8 L1163.1,720.7 L1163.2,738.7 L1163.6,740.5 L1163.7,723.1 L1164.1,716.2 L1164.2,734.6 L1164.6,736.3 L1164.7,715.1 L1165.1,722.1 L1165.2,741.5 L1165.6,737.0 L1165.7,724.6 L1166.1,719.1 L1166.2,740.4 L1166.6,741.8 L1166.7,725.9 L1167.1,721.9 L1167.2,738.9 L1167.6,747.1 L1167.7,720.3 L1168.1,718.3 L1168.2,732.5 L1168.6,738.1 L1168.7,723.7 L1169.1,715.2 L1169.2,734.3 L1169.6,737.4 L1169.7,719.7 L1170.1,718.1 L1170.2,734.3 L1170.6,733.6 L1170.7,721.5 L1171.1,722.9 L1171.2,740.8 L1171.6,738.3 L1171.7,720.4 L1172.1,719.9 L1172.2,735.6 L1172.6,734.7 L1172.7,720.3 L1173.1,723.3 L1173.2,735.6 L1173.6,736.7 L1173.7,719.8 L1174.1,722.4 L1174.2,735.9 L1174.6,739.5 L1174.7,720.2 L1175.1,723.3 L1175.2,737.6 L1175.6,734.1 L1175.7,716.6 L1176.1,721.1 L1176.2,742.9 L1176.6,739.0 L1176.7,721.7 L1177.1,717.4 L1177.2,743.2 L1177.6,736.2 L1177.7,715.1 L1178.1,721.1 L1178.2,736.2 L1178.6,733.5 L1178.7,720.1 L1179.1,726.6 L1179.2,734.8 L1179.6,738.6 L1179.7,720.6 L1180.1,722.1 L1180.2,739.8 L1180.6,736.6 L1180.7,726.4 L1181.1,720.5 L1181.2,733.9 L1181.6,732.7 L1181.7,718.9 L1182.1,719.6 L1182.2,735.1 L1182.6,735.9 L1182.7,722.0 L1183.1,716.0 L1183.2,736.1 L1183.6,733.4 L1183.7,717.4 L1184.1,723.1 L1184.2,734.5 L1184.6,729.6 L1184.7,715.5 L1185.1,722.5 L1185.2,740.5 L1185.6,737.6 L1185.7,719.2 L1186.1,723.9 L1186.2,738.7 L1186.6,734.5 L1186.7,716.3 L1187.1,721.2 L1187.2,731.3 L1187.6,737.6 L1187.7,719.7 L1188.1,722.9 L1188.2,738.8 L1188.6,728.6 L1188.7,716.2 L1189.1,719.8 L1189.2,737.2 L1189.6,736.1 L1189.7,722.6 L1190.1,719.9 L1190.2,733.1 L1190.6,732.0 L1190.7,719.1 L1191.1,714.5 L1191.2,729.6 L1191.6,745.8 L1191.7,721.1 L1192.1,720.1 L1192.2,736.3 L1192.6,741.4 L1192.7,721.1 L1193.1,721.1 L1193.2,737.0 L1193.6,735.3 L1193.7,718.6 L1194.1,724.3 L1194.2,734.1 L1194.6,735.9 L1194.7,720.0 L1195.1,723.6 L1195.2,735.3 L1195.6,737.3 L1195.7,717.5 L1196.1,717.5 L1196.2,732.5 L1196.6,739.2 L1196.7,718.1 L1197.1,720.7 L1197.2,735.1 L1197.6,734.8 L1197.7,722.3 L1198.1,718.1 L1198.2,732.2 L1198.6,734.9 L1198.7,720.9 L1199.1,719.8 L1199.2,742.1 L1199.6,733.0 L1199.7,717.0 L1200.1,712.3 L1200.2,732.7 L1200.6,733.9 L1200.7,721.2 L1201.1,712.2 L1201.2,732.3 L1201.6,734.7 L1201.7,717.4 L1202.1,724.0 L1202.2,736.7 L1202.6,733.4 L1202.7,722.4 L1203.1,720.2 L1203.2,742.6 L1203.6,735.5 L1203.7,720.2 L1204.1,719.0 L1204.2,739.2 L1204.6,735.2 L1204.7,717.4 L1205.1,723.3 L1205.2,736.4 L1205.6,738.1 L1205.7,723.0 L1206.1,718.2 L1206.2,733.7 L1206.6,734.5 L1206.7,719.8 L1207.1,720.2 L1207.2,734.3 L1207.6,745.7 L1207.7,717.5 L1208.1,722.6 L1208.2,737.9 L1208.6,739.7 L1208.7,717.4 L1209.1,720.9 L1209.2,736.8 L1209.6,735.9 L1209.7,724.3 L1210.1,717.9 L1210.2,737.0 L1210.6,735.7 L1210.7,718.4 L1211.1,722.1 L1211.2,743.2 L1211.6,732.9 L1211.7,726.3 L1212.1,720.4 L1212.2,741.4 L1212.6,730.7 L1212.7,720.8 L1213.1,719.7 L1213.2,731.1 L1213.6,736.7 L1213.7,716.5 L1214.1,720.1 L1214.2,734.0 L1214.6,731.7 L1214.7,721.5 L1215.1,720.3 L1215.2,739.2 L1215.6,735.2 L1215.7,719.6 L1216.1,722.9 L1216.2,736.7 L1216.6,733.6 L1216.7,722.2 L1217.1,721.8 L1217.2,738.7 L1217.6,736.9 L1217.7,719.3" fill="none" stroke="#ffff00" stroke-width="1.9" stroke-linejoin="bevel"/>
<rect x="557.8" y="218.6" width="2.2" height="433.9" fill="#ffff00"/>
<rect x="627.9" y="650.8" width="2.4" height="65.9" fill="#ffff00"/>
<rect x="698.1" y="643.4" width="2.4" height="73.3" fill="#ffff00"/>
<rect x="838.5" y="641.7" width="2.4" height="75.0" fill="#ffff00"/>
<rect x="1119.1" y="672.7" width="2.4" height="43.9" fill="#ffff00"/>
<rect x="553" y="797" width="14" height="18" fill="#000"/><rect x="554" y="798" width="12" height="16" fill="#008a00"/>
<text x="560.3" y="810" text-anchor="middle" font-size="14" fill="#001800" class="ct">F</text>
<text x="559.7" y="856" text-anchor="middle" font-size="17.33" fill="#fff" class="ct">1000</text>
<text x="629.2" y="856" text-anchor="middle" font-size="17.33" fill="#fff" class="ct">2000</text>
<text x="698.6" y="856" text-anchor="middle" font-size="17.33" fill="#fff" class="ct">3000</text>
<text x="768.1" y="856" text-anchor="middle" font-size="17.33" fill="#fff" class="ct">4000</text>
<text x="837.6" y="856" text-anchor="middle" font-size="17.33" fill="#fff" class="ct">5000</text>
<text x="907.1" y="856" text-anchor="middle" font-size="17.33" fill="#fff" class="ct">6000</text>
<text x="976.5" y="856" text-anchor="middle" font-size="17.33" fill="#fff" class="ct">7000</text>
<text x="1046.0" y="856" text-anchor="middle" font-size="17.33" fill="#fff" class="ct">8000</text>
<text x="1115.5" y="856" text-anchor="middle" font-size="17.33" fill="#fff" class="ct">9000</text>
<text x="1185.0" y="856" text-anchor="middle" font-size="17.33" fill="#fff" class="ct">10000</text>
<text x="456.3" y="223.6" text-anchor="middle" font-size="17.33" fill="#fff" class="ct">0</text>
<text x="456.3" y="392.5" text-anchor="middle" font-size="17.33" fill="#fff" class="ct">-50</text>
<text x="456.3" y="561.4" text-anchor="middle" font-size="17.33" fill="#fff" class="ct">-100</text>
<text x="456.3" y="730.3" text-anchor="middle" font-size="17.33" fill="#fff" class="ct">-150</text>
<text x="854.5" y="885.3" text-anchor="middle" font-size="18.2" font-weight="bold" fill="#fff" class="ct">Frequency (Hz)</text>
<text transform="translate(423.4,489) rotate(-90)" text-anchor="middle" font-size="18.2" font-weight="bold" fill="#fff" class="ct">dBV</text>
<rect x="1125.5" y="159.5" width="82" height="16" rx="1.5" fill="none" stroke="#f4f4f4"/>
<rect x="1162" y="159" width="46" height="17" rx="1.5" fill="#ffffff"/>
<text x="1127.2" y="172.2" font-size="13.4" fill="#d4d4d4" textLength="33.5" lengthAdjust="spacingAndGlyphs" class="ct">Quant</text>
<text x="1163.2" y="172.2" font-size="13.4" font-weight="bold" fill="#000" textLength="43" lengthAdjust="spacingAndGlyphs" class="ct">Asylum</text>
<text x="1137.7" y="185.9" font-size="9.6" textLength="57.6" lengthAdjust="spacingAndGlyphs" fill="#f0f0f0" class="ct">QA40x v1.173</text>
</svg>
</body></html>
